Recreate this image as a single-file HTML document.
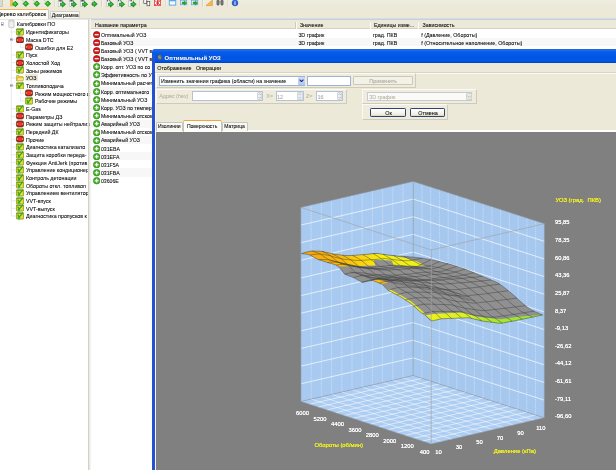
<!DOCTYPE html><html><head><meta charset="utf-8"><title>Оптимальный УОЗ</title><style>
html,body{margin:0;padding:0}
body{width:616px;height:470px;overflow:hidden;background:#ece9d8;position:relative;font-family:"Liberation Sans",sans-serif;font-size:5.3px;color:#000;line-height:1}
.a{position:absolute}
.t{position:absolute;white-space:nowrap;line-height:1;transform:translateY(-50%);-webkit-text-stroke:0.06px currentColor}
.b{font-weight:bold}
</style></head><body><div class="a" style="left:0;top:0;width:616px;height:470px;will-change:transform;overflow:hidden">
<div class="a" style="left:0.00px;top:0.00px;width:616.00px;height:8.00px;background:linear-gradient(#efeddf,#ebe8d8);"></div>
<div class="a" style="left:0.00px;top:7.40px;width:616.00px;height:11.00px;background:#ece9d8;"></div>
<div class="a" style="left:0.00px;top:18.30px;width:616.00px;height:1.20px;background:#d3dbe8;"></div>
<div class="a" style="left:-2.00px;top:8.50px;width:50.90px;height:10.40px;background:#fdfdfb;border:0.5px solid #c4c8c4;border-top:1.2px solid #f4b450;border-radius:1.5px 1.5px 0 0;box-sizing:border-box;border-bottom:none"></div>
<div class="t" style="left:-2.80px;top:14.90px;color:#000;font-size:5.40px;">Дерево калибровок</div>
<div class="a" style="left:49.60px;top:10.80px;width:30.00px;height:7.50px;background:#f8f7f2;border:0.5px solid #d0d0c8;border-radius:1.5px 1.5px 0 0;box-sizing:border-box;border-bottom:none"></div>
<div class="t" style="left:51.70px;top:15.70px;color:#000;font-size:5.20px;">Диаграмма</div>
<div class="a" style="left:0.00px;top:19.50px;width:88.30px;height:452.00px;background:#fff;"></div>
<div class="a" style="left:88.30px;top:18.80px;width:1.20px;height:452.00px;background:#d0d0cc;"></div>
<div class="a" style="left:89.50px;top:18.80px;width:1.50px;height:452.00px;background:#f4f3ee;"></div>
<div class="a" style="left:90.40px;top:19.30px;width:526.00px;height:451.00px;background:#fff;border-left:0.6px solid #c5cfdd;border-top:0.5px solid #c5cfdd;box-sizing:border-box"></div>
<div class="a" style="left:91.00px;top:19.80px;width:525.00px;height:9.60px;background:#ece9d8;border-bottom:0.7px solid #d6d2c2;box-sizing:border-box"></div>
<svg class="a" style="left:0;top:18.8px" width="89" height="452" viewBox="0 18.8 89 452">
<path d="M11.3 29 V215.85" stroke="#dcdcdc" stroke-width="0.6" fill="none"/>
<path d="M11.3 31.77 H16" stroke="#dcdcdc" stroke-width="0.6" fill="none"/>
<path d="M11.3 39.44 H16" stroke="#dcdcdc" stroke-width="0.6" fill="none"/>
<path d="M20.5 43.11 V47.11 H25.5" stroke="#dcdcdc" stroke-width="0.6" fill="none"/>
<path d="M11.3 54.78 H16" stroke="#dcdcdc" stroke-width="0.6" fill="none"/>
<path d="M11.3 62.45 H16" stroke="#dcdcdc" stroke-width="0.6" fill="none"/>
<path d="M11.3 70.12 H16" stroke="#dcdcdc" stroke-width="0.6" fill="none"/>
<path d="M11.3 77.79 H16" stroke="#dcdcdc" stroke-width="0.6" fill="none"/>
<path d="M11.3 85.46 H16" stroke="#dcdcdc" stroke-width="0.6" fill="none"/>
<path d="M20.5 89.13 V93.13 H25.5" stroke="#dcdcdc" stroke-width="0.6" fill="none"/>
<path d="M20.5 96.80 V100.80 H25.5" stroke="#dcdcdc" stroke-width="0.6" fill="none"/>
<path d="M11.3 108.47 H16" stroke="#dcdcdc" stroke-width="0.6" fill="none"/>
<path d="M11.3 116.14 H16" stroke="#dcdcdc" stroke-width="0.6" fill="none"/>
<path d="M11.3 123.81 H16" stroke="#dcdcdc" stroke-width="0.6" fill="none"/>
<path d="M11.3 131.48 H16" stroke="#dcdcdc" stroke-width="0.6" fill="none"/>
<path d="M11.3 139.15 H16" stroke="#dcdcdc" stroke-width="0.6" fill="none"/>
<path d="M11.3 146.82 H16" stroke="#dcdcdc" stroke-width="0.6" fill="none"/>
<path d="M11.3 154.49 H16" stroke="#dcdcdc" stroke-width="0.6" fill="none"/>
<path d="M11.3 162.16 H16" stroke="#dcdcdc" stroke-width="0.6" fill="none"/>
<path d="M11.3 169.83 H16" stroke="#dcdcdc" stroke-width="0.6" fill="none"/>
<path d="M11.3 177.50 H16" stroke="#dcdcdc" stroke-width="0.6" fill="none"/>
<path d="M11.3 185.17 H16" stroke="#dcdcdc" stroke-width="0.6" fill="none"/>
<path d="M11.3 192.84 H16" stroke="#dcdcdc" stroke-width="0.6" fill="none"/>
<path d="M11.3 200.51 H16" stroke="#dcdcdc" stroke-width="0.6" fill="none"/>
<path d="M11.3 208.18 H16" stroke="#dcdcdc" stroke-width="0.6" fill="none"/>
<path d="M11.3 215.85 H16" stroke="#dcdcdc" stroke-width="0.6" fill="none"/>
</svg>
<svg class="a" style="left:7.60px;top:19.10px" width="7" height="10" viewBox="0 0 7 10"><path d="M0.8 1.6 Q3.4 -0.2 6 1.6 L6 8.2 Q3.4 9.8 0.8 8.2Z" fill="#f1f1f1" stroke="#a9a9a9" stroke-width="0.6"/><path d="M0.8 1.8 Q3.4 3.2 6 1.8" fill="none" stroke="#b9b9b9" stroke-width="0.5"/></svg>
<div class="a" style="left:0.50px;top:22.40px;width:3.40px;height:3.40px;background:#fff;border:0.5px solid #c2cad6;box-sizing:border-box"></div>
<div class="a" style="left:1.30px;top:23.80px;width:1.80px;height:0.60px;background:#8890a0;"></div>
<div class="t" style="left:16.80px;top:25.00px;color:#000;">Калибровки ПО</div>
<svg class="a" style="left:16.00px;top:28.07px" width="8" height="7.6" viewBox="0 0 8 7.6"><rect x="0.3" y="0.9" width="7.4" height="6.2" rx="0.9" fill="#e6dc28" stroke="#6f9424" stroke-width="0.8"/><path d="M0.3 1.2 H7" stroke="#4c7a1c" stroke-width="0.7"/><circle cx="2.9" cy="5.6" r="1.3" fill="#48b030"/><path d="M2.9 7 V7.6" stroke="#5cb848" stroke-width="1"/><path d="M1.6 2.6 L3.2 5 L7.3 0.5" fill="none" stroke="#3aa428" stroke-width="1.2"/></svg>
<div class="t" style="left:25.90px;top:33.27px;color:#000;">Идентификаторы</div>
<svg class="a" style="left:16.00px;top:35.74px" width="8" height="7.6" viewBox="0 0 8 7.6"><rect x="0.4" y="0.9" width="7.2" height="6.1" rx="1.8" fill="#96281a" stroke="#6b2416" stroke-width="0.7"/><circle cx="4" cy="4" r="2.25" fill="#f23030"/><circle cx="1.5" cy="4" r="0.7" fill="#f0c83a"/><circle cx="6.5" cy="4" r="0.7" fill="#f0c83a"/></svg>
<div class="t" style="left:25.90px;top:40.94px;color:#000;">Маска DTC</div>
<svg class="a" style="left:25.40px;top:43.41px" width="8" height="7.6" viewBox="0 0 8 7.6"><rect x="0.4" y="0.9" width="7.2" height="6.1" rx="1.8" fill="#96281a" stroke="#6b2416" stroke-width="0.7"/><circle cx="4" cy="4" r="2.25" fill="#f23030"/><circle cx="1.5" cy="4" r="0.7" fill="#f0c83a"/><circle cx="6.5" cy="4" r="0.7" fill="#f0c83a"/></svg>
<div class="t" style="left:35.00px;top:48.61px;color:#000;">Ошибки для E2</div>
<svg class="a" style="left:16.00px;top:51.08px" width="8" height="7.6" viewBox="0 0 8 7.6"><rect x="0.3" y="0.9" width="7.4" height="6.2" rx="0.9" fill="#e6dc28" stroke="#6f9424" stroke-width="0.8"/><path d="M0.3 1.2 H7" stroke="#4c7a1c" stroke-width="0.7"/><circle cx="2.9" cy="5.6" r="1.3" fill="#48b030"/><path d="M2.9 7 V7.6" stroke="#5cb848" stroke-width="1"/><path d="M1.6 2.6 L3.2 5 L7.3 0.5" fill="none" stroke="#3aa428" stroke-width="1.2"/></svg>
<div class="t" style="left:25.90px;top:56.28px;color:#000;">Пуск</div>
<svg class="a" style="left:16.00px;top:58.75px" width="8" height="7.6" viewBox="0 0 8 7.6"><rect x="0.4" y="0.9" width="7.2" height="6.1" rx="1.8" fill="#96281a" stroke="#6b2416" stroke-width="0.7"/><circle cx="4" cy="4" r="2.25" fill="#f23030"/><circle cx="1.5" cy="4" r="0.7" fill="#f0c83a"/><circle cx="6.5" cy="4" r="0.7" fill="#f0c83a"/></svg>
<div class="t" style="left:25.90px;top:63.95px;color:#000;">Холостой Ход</div>
<svg class="a" style="left:16.00px;top:66.42px" width="8" height="7.6" viewBox="0 0 8 7.6"><rect x="0.3" y="0.9" width="7.4" height="6.2" rx="0.9" fill="#e6dc28" stroke="#6f9424" stroke-width="0.8"/><path d="M0.3 1.2 H7" stroke="#4c7a1c" stroke-width="0.7"/><circle cx="2.9" cy="5.6" r="1.3" fill="#48b030"/><path d="M2.9 7 V7.6" stroke="#5cb848" stroke-width="1"/><path d="M1.6 2.6 L3.2 5 L7.3 0.5" fill="none" stroke="#3aa428" stroke-width="1.2"/></svg>
<div class="t" style="left:25.90px;top:71.62px;color:#000;">Зоны режимов</div>
<svg class="a" style="left:16.00px;top:74.09px" width="8" height="7.6" viewBox="0 0 8 7.6"><path d="M0.5 1.6 L3 1.6 L3.6 2.4 L7 2.4 L7 6.8 L0.5 6.8Z" fill="#f4d23a" stroke="#a08a20" stroke-width="0.5"/><path d="M0.5 6.8 L1.8 3.6 L7.8 3.6 L7 6.8Z" fill="#fbe773" stroke="#a08a20" stroke-width="0.4"/></svg>
<div class="a" style="left:25.10px;top:74.19px;width:12.50px;height:7.20px;background:#ece9d8;"></div>
<div class="t" style="left:25.90px;top:79.29px;color:#000;">УОЗ</div>
<svg class="a" style="left:16.00px;top:81.76px" width="8" height="7.6" viewBox="0 0 8 7.6"><rect x="0.3" y="0.9" width="7.4" height="6.2" rx="0.9" fill="#e6dc28" stroke="#6f9424" stroke-width="0.8"/><path d="M0.3 1.2 H7" stroke="#4c7a1c" stroke-width="0.7"/><circle cx="2.9" cy="5.6" r="1.3" fill="#48b030"/><path d="M2.9 7 V7.6" stroke="#5cb848" stroke-width="1"/><path d="M1.6 2.6 L3.2 5 L7.3 0.5" fill="none" stroke="#3aa428" stroke-width="1.2"/></svg>
<div class="t" style="left:25.90px;top:86.96px;color:#000;">Топливоподача</div>
<svg class="a" style="left:25.40px;top:89.43px" width="8" height="7.6" viewBox="0 0 8 7.6"><rect x="0.4" y="0.9" width="7.2" height="6.1" rx="1.8" fill="#96281a" stroke="#6b2416" stroke-width="0.7"/><circle cx="4" cy="4" r="2.25" fill="#f23030"/><circle cx="1.5" cy="4" r="0.7" fill="#f0c83a"/><circle cx="6.5" cy="4" r="0.7" fill="#f0c83a"/></svg>
<div class="t" style="left:35.00px;top:94.63px;color:#000;">Режим мощностного с</div>
<svg class="a" style="left:25.40px;top:97.10px" width="8" height="7.6" viewBox="0 0 8 7.6"><rect x="0.3" y="0.9" width="7.4" height="6.2" rx="0.9" fill="#e6dc28" stroke="#6f9424" stroke-width="0.8"/><path d="M0.3 1.2 H7" stroke="#4c7a1c" stroke-width="0.7"/><circle cx="2.9" cy="5.6" r="1.3" fill="#48b030"/><path d="M2.9 7 V7.6" stroke="#5cb848" stroke-width="1"/><path d="M1.6 2.6 L3.2 5 L7.3 0.5" fill="none" stroke="#3aa428" stroke-width="1.2"/></svg>
<div class="t" style="left:35.00px;top:102.30px;color:#000;">Рабочие режимы</div>
<svg class="a" style="left:16.00px;top:104.77px" width="8" height="7.6" viewBox="0 0 8 7.6"><rect x="0.3" y="0.9" width="7.4" height="6.2" rx="0.9" fill="#e6dc28" stroke="#6f9424" stroke-width="0.8"/><path d="M0.3 1.2 H7" stroke="#4c7a1c" stroke-width="0.7"/><circle cx="2.9" cy="5.6" r="1.3" fill="#48b030"/><path d="M2.9 7 V7.6" stroke="#5cb848" stroke-width="1"/><path d="M1.6 2.6 L3.2 5 L7.3 0.5" fill="none" stroke="#3aa428" stroke-width="1.2"/></svg>
<div class="t" style="left:25.90px;top:109.97px;color:#000;">E-Gas</div>
<svg class="a" style="left:16.00px;top:112.44px" width="8" height="7.6" viewBox="0 0 8 7.6"><rect x="0.4" y="0.9" width="7.2" height="6.1" rx="1.8" fill="#96281a" stroke="#6b2416" stroke-width="0.7"/><circle cx="4" cy="4" r="2.25" fill="#f23030"/><circle cx="1.5" cy="4" r="0.7" fill="#f0c83a"/><circle cx="6.5" cy="4" r="0.7" fill="#f0c83a"/></svg>
<div class="t" style="left:25.90px;top:117.64px;color:#000;">Параметры ДЗ</div>
<svg class="a" style="left:16.00px;top:120.11px" width="8" height="7.6" viewBox="0 0 8 7.6"><rect x="0.4" y="0.9" width="7.2" height="6.1" rx="1.8" fill="#96281a" stroke="#6b2416" stroke-width="0.7"/><circle cx="4" cy="4" r="2.25" fill="#f23030"/><circle cx="1.5" cy="4" r="0.7" fill="#f0c83a"/><circle cx="6.5" cy="4" r="0.7" fill="#f0c83a"/></svg>
<div class="t" style="left:25.90px;top:125.31px;color:#000;">Режим защиты нейтрализ</div>
<svg class="a" style="left:16.00px;top:127.78px" width="8" height="7.6" viewBox="0 0 8 7.6"><rect x="0.3" y="0.9" width="7.4" height="6.2" rx="0.9" fill="#e6dc28" stroke="#6f9424" stroke-width="0.8"/><path d="M0.3 1.2 H7" stroke="#4c7a1c" stroke-width="0.7"/><circle cx="2.9" cy="5.6" r="1.3" fill="#48b030"/><path d="M2.9 7 V7.6" stroke="#5cb848" stroke-width="1"/><path d="M1.6 2.6 L3.2 5 L7.3 0.5" fill="none" stroke="#3aa428" stroke-width="1.2"/></svg>
<div class="t" style="left:25.90px;top:132.98px;color:#000;">Передний ДК</div>
<svg class="a" style="left:16.00px;top:135.45px" width="8" height="7.6" viewBox="0 0 8 7.6"><rect x="0.4" y="0.9" width="7.2" height="6.1" rx="1.8" fill="#96281a" stroke="#6b2416" stroke-width="0.7"/><circle cx="4" cy="4" r="2.25" fill="#f23030"/><circle cx="1.5" cy="4" r="0.7" fill="#f0c83a"/><circle cx="6.5" cy="4" r="0.7" fill="#f0c83a"/></svg>
<div class="t" style="left:25.90px;top:140.65px;color:#000;">Прочие</div>
<svg class="a" style="left:16.00px;top:143.12px" width="8" height="7.6" viewBox="0 0 8 7.6"><rect x="0.3" y="0.9" width="7.4" height="6.2" rx="0.9" fill="#e6dc28" stroke="#6f9424" stroke-width="0.8"/><path d="M0.3 1.2 H7" stroke="#4c7a1c" stroke-width="0.7"/><circle cx="2.9" cy="5.6" r="1.3" fill="#48b030"/><path d="M2.9 7 V7.6" stroke="#5cb848" stroke-width="1"/><path d="M1.6 2.6 L3.2 5 L7.3 0.5" fill="none" stroke="#3aa428" stroke-width="1.2"/></svg>
<div class="t" style="left:25.90px;top:148.32px;color:#000;">Диагностика катализато</div>
<svg class="a" style="left:16.00px;top:150.79px" width="8" height="7.6" viewBox="0 0 8 7.6"><rect x="0.3" y="0.9" width="7.4" height="6.2" rx="0.9" fill="#e6dc28" stroke="#6f9424" stroke-width="0.8"/><path d="M0.3 1.2 H7" stroke="#4c7a1c" stroke-width="0.7"/><circle cx="2.9" cy="5.6" r="1.3" fill="#48b030"/><path d="M2.9 7 V7.6" stroke="#5cb848" stroke-width="1"/><path d="M1.6 2.6 L3.2 5 L7.3 0.5" fill="none" stroke="#3aa428" stroke-width="1.2"/></svg>
<div class="t" style="left:25.90px;top:155.99px;color:#000;">Защита коробки переда-</div>
<svg class="a" style="left:16.00px;top:158.46px" width="8" height="7.6" viewBox="0 0 8 7.6"><rect x="0.3" y="0.9" width="7.4" height="6.2" rx="0.9" fill="#e6dc28" stroke="#6f9424" stroke-width="0.8"/><path d="M0.3 1.2 H7" stroke="#4c7a1c" stroke-width="0.7"/><circle cx="2.9" cy="5.6" r="1.3" fill="#48b030"/><path d="M2.9 7 V7.6" stroke="#5cb848" stroke-width="1"/><path d="M1.6 2.6 L3.2 5 L7.3 0.5" fill="none" stroke="#3aa428" stroke-width="1.2"/></svg>
<div class="t" style="left:25.90px;top:163.66px;color:#000;">Функция AntiJerk (против</div>
<svg class="a" style="left:16.00px;top:166.13px" width="8" height="7.6" viewBox="0 0 8 7.6"><rect x="0.3" y="0.9" width="7.4" height="6.2" rx="0.9" fill="#e6dc28" stroke="#6f9424" stroke-width="0.8"/><path d="M0.3 1.2 H7" stroke="#4c7a1c" stroke-width="0.7"/><circle cx="2.9" cy="5.6" r="1.3" fill="#48b030"/><path d="M2.9 7 V7.6" stroke="#5cb848" stroke-width="1"/><path d="M1.6 2.6 L3.2 5 L7.3 0.5" fill="none" stroke="#3aa428" stroke-width="1.2"/></svg>
<div class="t" style="left:25.90px;top:171.33px;color:#000;">Управление кондиционер</div>
<svg class="a" style="left:16.00px;top:173.80px" width="8" height="7.6" viewBox="0 0 8 7.6"><rect x="0.3" y="0.9" width="7.4" height="6.2" rx="0.9" fill="#e6dc28" stroke="#6f9424" stroke-width="0.8"/><path d="M0.3 1.2 H7" stroke="#4c7a1c" stroke-width="0.7"/><circle cx="2.9" cy="5.6" r="1.3" fill="#48b030"/><path d="M2.9 7 V7.6" stroke="#5cb848" stroke-width="1"/><path d="M1.6 2.6 L3.2 5 L7.3 0.5" fill="none" stroke="#3aa428" stroke-width="1.2"/></svg>
<div class="t" style="left:25.90px;top:179.00px;color:#000;">Контроль детонации</div>
<svg class="a" style="left:16.00px;top:181.47px" width="8" height="7.6" viewBox="0 0 8 7.6"><rect x="0.3" y="0.9" width="7.4" height="6.2" rx="0.9" fill="#e6dc28" stroke="#6f9424" stroke-width="0.8"/><path d="M0.3 1.2 H7" stroke="#4c7a1c" stroke-width="0.7"/><circle cx="2.9" cy="5.6" r="1.3" fill="#48b030"/><path d="M2.9 7 V7.6" stroke="#5cb848" stroke-width="1"/><path d="M1.6 2.6 L3.2 5 L7.3 0.5" fill="none" stroke="#3aa428" stroke-width="1.2"/></svg>
<div class="t" style="left:25.90px;top:186.67px;color:#000;">Обороты откл. топливоп</div>
<svg class="a" style="left:16.00px;top:189.14px" width="8" height="7.6" viewBox="0 0 8 7.6"><rect x="0.3" y="0.9" width="7.4" height="6.2" rx="0.9" fill="#e6dc28" stroke="#6f9424" stroke-width="0.8"/><path d="M0.3 1.2 H7" stroke="#4c7a1c" stroke-width="0.7"/><circle cx="2.9" cy="5.6" r="1.3" fill="#48b030"/><path d="M2.9 7 V7.6" stroke="#5cb848" stroke-width="1"/><path d="M1.6 2.6 L3.2 5 L7.3 0.5" fill="none" stroke="#3aa428" stroke-width="1.2"/></svg>
<div class="t" style="left:25.90px;top:194.34px;color:#000;">Управлением вентилятор</div>
<svg class="a" style="left:16.00px;top:196.81px" width="8" height="7.6" viewBox="0 0 8 7.6"><rect x="0.3" y="0.9" width="7.4" height="6.2" rx="0.9" fill="#e6dc28" stroke="#6f9424" stroke-width="0.8"/><path d="M0.3 1.2 H7" stroke="#4c7a1c" stroke-width="0.7"/><circle cx="2.9" cy="5.6" r="1.3" fill="#48b030"/><path d="M2.9 7 V7.6" stroke="#5cb848" stroke-width="1"/><path d="M1.6 2.6 L3.2 5 L7.3 0.5" fill="none" stroke="#3aa428" stroke-width="1.2"/></svg>
<div class="t" style="left:25.90px;top:202.01px;color:#000;">VVT-впуск</div>
<svg class="a" style="left:16.00px;top:204.48px" width="8" height="7.6" viewBox="0 0 8 7.6"><rect x="0.3" y="0.9" width="7.4" height="6.2" rx="0.9" fill="#e6dc28" stroke="#6f9424" stroke-width="0.8"/><path d="M0.3 1.2 H7" stroke="#4c7a1c" stroke-width="0.7"/><circle cx="2.9" cy="5.6" r="1.3" fill="#48b030"/><path d="M2.9 7 V7.6" stroke="#5cb848" stroke-width="1"/><path d="M1.6 2.6 L3.2 5 L7.3 0.5" fill="none" stroke="#3aa428" stroke-width="1.2"/></svg>
<div class="t" style="left:25.90px;top:209.68px;color:#000;">VVT-выпуск</div>
<svg class="a" style="left:16.00px;top:212.15px" width="8" height="7.6" viewBox="0 0 8 7.6"><rect x="0.3" y="0.9" width="7.4" height="6.2" rx="0.9" fill="#e6dc28" stroke="#6f9424" stroke-width="0.8"/><path d="M0.3 1.2 H7" stroke="#4c7a1c" stroke-width="0.7"/><circle cx="2.9" cy="5.6" r="1.3" fill="#48b030"/><path d="M2.9 7 V7.6" stroke="#5cb848" stroke-width="1"/><path d="M1.6 2.6 L3.2 5 L7.3 0.5" fill="none" stroke="#3aa428" stroke-width="1.2"/></svg>
<div class="t" style="left:25.90px;top:217.35px;color:#000;">Диагностика пропусков к</div>
<div class="a" style="left:9.60px;top:37.74px;width:3.40px;height:3.40px;background:#e4ebf5;border:0.5px solid #b8c6da;box-sizing:border-box"></div>
<div class="a" style="left:10.40px;top:39.14px;width:1.80px;height:0.60px;background:#8c96a8;"></div>
<div class="a" style="left:9.60px;top:83.76px;width:3.40px;height:3.40px;background:#e4ebf5;border:0.5px solid #b8c6da;box-sizing:border-box"></div>
<div class="a" style="left:10.40px;top:85.16px;width:1.80px;height:0.60px;background:#8c96a8;"></div>
<div class="a" style="left:88.30px;top:18.80px;width:1.20px;height:452.00px;background:#d0d0cc;"></div>
<div class="a" style="left:89.50px;top:18.80px;width:1.50px;height:452.00px;background:#f4f3ee;"></div>
<div class="t" style="left:95.00px;top:25.50px;color:#000;">Название параметра</div>
<div class="t" style="left:299.90px;top:25.50px;color:#000;">Значение</div>
<div class="t" style="left:374.00px;top:25.50px;color:#000;">Единицы изме...</div>
<div class="t" style="left:422.50px;top:25.50px;color:#000;">Зависимость</div>
<div class="a" style="left:295.00px;top:21.50px;width:0.60px;height:7.00px;background:#cfccbc;"></div>
<div class="a" style="left:295.60px;top:21.50px;width:0.60px;height:7.00px;background:#fbfaf6;"></div>
<div class="a" style="left:369.70px;top:21.50px;width:0.60px;height:7.00px;background:#cfccbc;"></div>
<div class="a" style="left:370.30px;top:21.50px;width:0.60px;height:7.00px;background:#fbfaf6;"></div>
<div class="a" style="left:417.70px;top:21.50px;width:0.60px;height:7.00px;background:#cfccbc;"></div>
<div class="a" style="left:418.30px;top:21.50px;width:0.60px;height:7.00px;background:#fbfaf6;"></div>
<svg class="a" style="left:93.1px;top:30.70px" width="7.4" height="7.4" viewBox="-0.2 -0.2 7.4 7.4"><circle cx="3.5" cy="3.5" r="3.25" fill="#d81c1c" stroke="#8a1010" stroke-width="0.7"/>
<rect x="1.5" y="2.9" width="4" height="1.2" fill="#fff"/></svg>
<div class="t" style="left:100.90px;top:35.50px;color:#000;font-size:5.20px;">Оптимальный УОЗ</div>
<div class="t" style="left:298.40px;top:35.50px;color:#000;font-size:5.35px;">3D график</div>
<div class="t" style="left:372.80px;top:35.50px;color:#000;font-size:5.35px;">град. ПКВ</div>
<div class="t" style="left:421.20px;top:35.50px;color:#000;font-size:5.35px;">f (Давление, Обороты)</div>
<div class="a" style="left:91.00px;top:38.07px;width:525.00px;height:8.15px;background:#f7f7f7;"></div>
<svg class="a" style="left:93.1px;top:38.85px" width="7.4" height="7.4" viewBox="-0.2 -0.2 7.4 7.4"><circle cx="3.5" cy="3.5" r="3.25" fill="#d81c1c" stroke="#8a1010" stroke-width="0.7"/>
<rect x="1.5" y="2.9" width="4" height="1.2" fill="#fff"/></svg>
<div class="t" style="left:100.90px;top:43.65px;color:#000;font-size:5.20px;">Базовый УОЗ</div>
<div class="t" style="left:298.40px;top:43.65px;color:#000;font-size:5.35px;">3D график</div>
<div class="t" style="left:372.80px;top:43.65px;color:#000;font-size:5.35px;">град. ПКВ</div>
<div class="t" style="left:421.20px;top:43.65px;color:#000;font-size:5.35px;">f (Относительное наполнение, Обороты)</div>
<svg class="a" style="left:93.1px;top:47.00px" width="7.4" height="7.4" viewBox="-0.2 -0.2 7.4 7.4"><circle cx="3.5" cy="3.5" r="3.25" fill="#d81c1c" stroke="#8a1010" stroke-width="0.7"/>
<rect x="1.5" y="2.9" width="4" height="1.2" fill="#fff"/></svg>
<div class="t" style="left:100.90px;top:51.80px;color:#000;font-size:5.20px;">Базовый УОЗ ( VVT в</div>
<div class="a" style="left:91.00px;top:54.38px;width:525.00px;height:8.15px;background:#f7f7f7;"></div>
<svg class="a" style="left:93.1px;top:55.15px" width="7.4" height="7.4" viewBox="-0.2 -0.2 7.4 7.4"><circle cx="3.5" cy="3.5" r="3.25" fill="#d81c1c" stroke="#8a1010" stroke-width="0.7"/>
<rect x="1.5" y="2.9" width="4" height="1.2" fill="#fff"/></svg>
<div class="t" style="left:100.90px;top:59.95px;color:#000;font-size:5.20px;">Базовый УОЗ ( VVT в</div>
<svg class="a" style="left:93.1px;top:63.30px" width="7.4" height="7.4" viewBox="-0.2 -0.2 7.4 7.4"><circle cx="3.5" cy="3.5" r="3.25" fill="#4cb82c" stroke="#2c7c18" stroke-width="0.7"/>
<path d="M3.5 1.6 V5.4 M1.6 3.5 H5.4" stroke="#fff" stroke-width="1.1"/></svg>
<div class="t" style="left:100.90px;top:68.10px;color:#000;font-size:5.20px;">Корр. опт. УОЗ по со</div>
<div class="a" style="left:91.00px;top:70.67px;width:525.00px;height:8.15px;background:#f7f7f7;"></div>
<svg class="a" style="left:93.1px;top:71.45px" width="7.4" height="7.4" viewBox="-0.2 -0.2 7.4 7.4"><circle cx="3.5" cy="3.5" r="3.25" fill="#4cb82c" stroke="#2c7c18" stroke-width="0.7"/>
<path d="M3.5 1.6 V5.4 M1.6 3.5 H5.4" stroke="#fff" stroke-width="1.1"/></svg>
<div class="t" style="left:100.90px;top:76.25px;color:#000;font-size:5.20px;">Эффективность по У</div>
<svg class="a" style="left:93.1px;top:79.60px" width="7.4" height="7.4" viewBox="-0.2 -0.2 7.4 7.4"><circle cx="3.5" cy="3.5" r="3.25" fill="#4cb82c" stroke="#2c7c18" stroke-width="0.7"/>
<path d="M3.5 1.6 V5.4 M1.6 3.5 H5.4" stroke="#fff" stroke-width="1.1"/></svg>
<div class="t" style="left:100.90px;top:84.40px;color:#000;font-size:5.20px;">Минимальный расчет</div>
<div class="a" style="left:91.00px;top:86.98px;width:525.00px;height:8.15px;background:#f7f7f7;"></div>
<svg class="a" style="left:93.1px;top:87.75px" width="7.4" height="7.4" viewBox="-0.2 -0.2 7.4 7.4"><circle cx="3.5" cy="3.5" r="3.25" fill="#4cb82c" stroke="#2c7c18" stroke-width="0.7"/>
<path d="M3.5 1.6 V5.4 M1.6 3.5 H5.4" stroke="#fff" stroke-width="1.1"/></svg>
<div class="t" style="left:100.90px;top:92.55px;color:#000;font-size:5.20px;">Корр. оптимального</div>
<svg class="a" style="left:93.1px;top:95.90px" width="7.4" height="7.4" viewBox="-0.2 -0.2 7.4 7.4"><circle cx="3.5" cy="3.5" r="3.25" fill="#4cb82c" stroke="#2c7c18" stroke-width="0.7"/>
<path d="M3.5 1.6 V5.4 M1.6 3.5 H5.4" stroke="#fff" stroke-width="1.1"/></svg>
<div class="t" style="left:100.90px;top:100.70px;color:#000;font-size:5.20px;">Минимальный УОЗ</div>
<div class="a" style="left:91.00px;top:103.28px;width:525.00px;height:8.15px;background:#f7f7f7;"></div>
<svg class="a" style="left:93.1px;top:104.05px" width="7.4" height="7.4" viewBox="-0.2 -0.2 7.4 7.4"><circle cx="3.5" cy="3.5" r="3.25" fill="#4cb82c" stroke="#2c7c18" stroke-width="0.7"/>
<path d="M3.5 1.6 V5.4 M1.6 3.5 H5.4" stroke="#fff" stroke-width="1.1"/></svg>
<div class="t" style="left:100.90px;top:108.85px;color:#000;font-size:5.20px;">Корр. УОЗ по темпер</div>
<svg class="a" style="left:93.1px;top:112.20px" width="7.4" height="7.4" viewBox="-0.2 -0.2 7.4 7.4"><circle cx="3.5" cy="3.5" r="3.25" fill="#4cb82c" stroke="#2c7c18" stroke-width="0.7"/>
<path d="M3.5 1.6 V5.4 M1.6 3.5 H5.4" stroke="#fff" stroke-width="1.1"/></svg>
<div class="t" style="left:100.90px;top:117.00px;color:#000;font-size:5.20px;">Минимальный отскок</div>
<div class="a" style="left:91.00px;top:119.58px;width:525.00px;height:8.15px;background:#f7f7f7;"></div>
<svg class="a" style="left:93.1px;top:120.35px" width="7.4" height="7.4" viewBox="-0.2 -0.2 7.4 7.4"><circle cx="3.5" cy="3.5" r="3.25" fill="#4cb82c" stroke="#2c7c18" stroke-width="0.7"/>
<path d="M3.5 1.6 V5.4 M1.6 3.5 H5.4" stroke="#fff" stroke-width="1.1"/></svg>
<div class="t" style="left:100.90px;top:125.15px;color:#000;font-size:5.20px;">Аварийный УОЗ</div>
<svg class="a" style="left:93.1px;top:128.50px" width="7.4" height="7.4" viewBox="-0.2 -0.2 7.4 7.4"><circle cx="3.5" cy="3.5" r="3.25" fill="#4cb82c" stroke="#2c7c18" stroke-width="0.7"/>
<path d="M3.5 1.6 V5.4 M1.6 3.5 H5.4" stroke="#fff" stroke-width="1.1"/></svg>
<div class="t" style="left:100.90px;top:133.30px;color:#000;font-size:5.20px;">Минимальный отскок</div>
<div class="a" style="left:91.00px;top:135.88px;width:525.00px;height:8.15px;background:#f7f7f7;"></div>
<svg class="a" style="left:93.1px;top:136.65px" width="7.4" height="7.4" viewBox="-0.2 -0.2 7.4 7.4"><circle cx="3.5" cy="3.5" r="3.25" fill="#4cb82c" stroke="#2c7c18" stroke-width="0.7"/>
<path d="M3.5 1.6 V5.4 M1.6 3.5 H5.4" stroke="#fff" stroke-width="1.1"/></svg>
<div class="t" style="left:100.90px;top:141.45px;color:#000;font-size:5.20px;">Аварийный УОЗ</div>
<svg class="a" style="left:93.1px;top:144.80px" width="7.4" height="7.4" viewBox="-0.2 -0.2 7.4 7.4"><circle cx="3.5" cy="3.5" r="3.25" fill="#4cb82c" stroke="#2c7c18" stroke-width="0.7"/>
<path d="M3.5 1.6 V5.4 M1.6 3.5 H5.4" stroke="#fff" stroke-width="1.1"/></svg>
<div class="t" style="left:100.90px;top:149.60px;color:#000;font-size:5.20px;">031EBA</div>
<div class="a" style="left:91.00px;top:152.18px;width:525.00px;height:8.15px;background:#f7f7f7;"></div>
<svg class="a" style="left:93.1px;top:152.95px" width="7.4" height="7.4" viewBox="-0.2 -0.2 7.4 7.4"><circle cx="3.5" cy="3.5" r="3.25" fill="#4cb82c" stroke="#2c7c18" stroke-width="0.7"/>
<path d="M3.5 1.6 V5.4 M1.6 3.5 H5.4" stroke="#fff" stroke-width="1.1"/></svg>
<div class="t" style="left:100.90px;top:157.75px;color:#000;font-size:5.20px;">031EFA</div>
<svg class="a" style="left:93.1px;top:161.10px" width="7.4" height="7.4" viewBox="-0.2 -0.2 7.4 7.4"><circle cx="3.5" cy="3.5" r="3.25" fill="#4cb82c" stroke="#2c7c18" stroke-width="0.7"/>
<path d="M3.5 1.6 V5.4 M1.6 3.5 H5.4" stroke="#fff" stroke-width="1.1"/></svg>
<div class="t" style="left:100.90px;top:165.90px;color:#000;font-size:5.20px;">031F5A</div>
<div class="a" style="left:91.00px;top:168.48px;width:525.00px;height:8.15px;background:#f7f7f7;"></div>
<svg class="a" style="left:93.1px;top:169.25px" width="7.4" height="7.4" viewBox="-0.2 -0.2 7.4 7.4"><circle cx="3.5" cy="3.5" r="3.25" fill="#4cb82c" stroke="#2c7c18" stroke-width="0.7"/>
<path d="M3.5 1.6 V5.4 M1.6 3.5 H5.4" stroke="#fff" stroke-width="1.1"/></svg>
<div class="t" style="left:100.90px;top:174.05px;color:#000;font-size:5.20px;">031FBA</div>
<svg class="a" style="left:93.1px;top:177.40px" width="7.4" height="7.4" viewBox="-0.2 -0.2 7.4 7.4"><circle cx="3.5" cy="3.5" r="3.25" fill="#4cb82c" stroke="#2c7c18" stroke-width="0.7"/>
<path d="M3.5 1.6 V5.4 M1.6 3.5 H5.4" stroke="#fff" stroke-width="1.1"/></svg>
<div class="t" style="left:100.90px;top:182.20px;color:#000;font-size:5.20px;">03606E</div>
<svg class="a" style="left:0;top:0" width="250" height="8" viewBox="0 0 250 8">
<rect x="-1" y="-1" width="3.4" height="7.4" fill="#dcdad0" stroke="#a8a69a" stroke-width="0.5"/>
<path d="M10.4 0 L12.6 0 L13.2 6 L10.6 6Z" fill="#f3c545" stroke="#c9952a" stroke-width="0.4"/>
<path d="M12.5 4.0 l2.8 -2.8 l2.8 2.8 l-2.8 2.8z" fill="#22b222" stroke="#168a16" stroke-width="0.8" stroke-linejoin="round"/><circle cx="15.0" cy="3.6" r="0.9" fill="#62dc62"/>
<path d="M21.8 0 l2.4 2" stroke="#b4b4b4" stroke-width="0.6"/>
<path d="M23.0 3.7 l2.8 -2.8 l2.8 2.8 l-2.8 2.8z" fill="#22b222" stroke="#168a16" stroke-width="0.8" stroke-linejoin="round"/><circle cx="25.5" cy="3.3" r="0.9" fill="#62dc62"/>
<path d="M32.8 0 l2.4 2" stroke="#b4b4b4" stroke-width="0.6"/>
<path d="M34.0 3.7 l2.8 -2.8 l2.8 2.8 l-2.8 2.8z" fill="#22b222" stroke="#168a16" stroke-width="0.8" stroke-linejoin="round"/><circle cx="36.5" cy="3.3" r="0.9" fill="#62dc62"/>
<path d="M43.8 0 l2.4 2" stroke="#b4b4b4" stroke-width="0.6"/>
<path d="M45.0 3.7 l2.8 -2.8 l2.8 2.8 l-2.8 2.8z" fill="#22b222" stroke="#168a16" stroke-width="0.8" stroke-linejoin="round"/><circle cx="47.5" cy="3.3" r="0.9" fill="#62dc62"/>
<rect x="54.2" y="0" width="0.6" height="6.6" fill="#c9c6b6"/><rect x="54.8" y="0" width="0.5" height="6.6" fill="#fbfaf5"/>
<rect x="58.2" y="-1" width="4.6" height="7.2" fill="#fbfcfd" stroke="#a9aeb8" stroke-width="0.5"/><rect x="58.8" y="0" width="0.8" height="1.6" fill="#222"/><rect x="60.1" y="0" width="0.8" height="1.6" fill="#222"/><rect x="61.4" y="0" width="0.8" height="1.6" fill="#222"/>
<path d="M60.4 3.1 h2.1 v-1.6 l3.2 2.8 l-3.2 2.8 v-1.6 h-2.1z" fill="#22b02c" stroke="#0b6f16" stroke-width="0.6" stroke-linejoin="round"/><path d="M61.2 4.0 h2.4" stroke="#7ee486" stroke-width="0.6"/>
<rect x="69.2" y="-1" width="4.6" height="7.2" fill="#fbfcfd" stroke="#a9aeb8" stroke-width="0.5"/><rect x="69.8" y="0" width="0.8" height="1.6" fill="#222"/><rect x="71.1" y="0" width="0.8" height="1.6" fill="#222"/><rect x="72.4" y="0" width="0.8" height="1.6" fill="#222"/>
<path d="M71.4 3.1 h2.1 v-1.6 l3.2 2.8 l-3.2 2.8 v-1.6 h-2.1z" fill="#22b02c" stroke="#0b6f16" stroke-width="0.6" stroke-linejoin="round"/><path d="M72.2 4.0 h2.4" stroke="#7ee486" stroke-width="0.6"/>
<rect x="80.2" y="-1" width="4.6" height="7.2" fill="#fbfcfd" stroke="#a9aeb8" stroke-width="0.5"/><rect x="80.8" y="0" width="0.8" height="1.6" fill="#222"/><rect x="82.1" y="0" width="0.8" height="1.6" fill="#222"/><rect x="83.4" y="0" width="0.8" height="1.6" fill="#222"/>
<path d="M82.4 3.1 h2.1 v-1.6 l3.2 2.8 l-3.2 2.8 v-1.6 h-2.1z" fill="#22b02c" stroke="#0b6f16" stroke-width="0.6" stroke-linejoin="round"/><path d="M83.2 4.0 h2.4" stroke="#7ee486" stroke-width="0.6"/>
<path d="M92.0 2.8 h2.1 v-1.6 l3.2 2.8 l-3.2 2.8 v-1.6 h-2.1z" fill="#22b02c" stroke="#0b6f16" stroke-width="0.6" stroke-linejoin="round"/><path d="M92.8 3.7 h2.4" stroke="#7ee486" stroke-width="0.6"/>
<path d="M93 0 v1.4" stroke="#999" stroke-width="0.6"/>
<rect x="101.4" y="0" width="0.6" height="6.6" fill="#c9c6b6"/><rect x="102.0" y="0" width="0.5" height="6.6" fill="#fbfaf5"/>
<rect x="106.2" y="-1" width="4.6" height="7.2" fill="#fbfcfd" stroke="#a9aeb8" stroke-width="0.5"/><rect x="107.2" y="0" width="0.8" height="1.4" fill="#333"/><rect x="108.8" y="0" width="0.8" height="1.4" fill="#333"/>
<path d="M108.4 3.1 h2.1 v-1.6 l3.2 2.8 l-3.2 2.8 v-1.6 h-2.1z" fill="#22b02c" stroke="#0b6f16" stroke-width="0.6" stroke-linejoin="round"/><path d="M109.2 4.0 h2.4" stroke="#7ee486" stroke-width="0.6"/>
<rect x="117.2" y="-1" width="4.6" height="7.2" fill="#fbfcfd" stroke="#a9aeb8" stroke-width="0.5"/><rect x="118.2" y="0" width="0.8" height="1.4" fill="#333"/><rect x="119.8" y="0" width="0.8" height="1.4" fill="#333"/>
<path d="M119.4 3.1 h2.1 v-1.6 l3.2 2.8 l-3.2 2.8 v-1.6 h-2.1z" fill="#22b02c" stroke="#0b6f16" stroke-width="0.6" stroke-linejoin="round"/><path d="M120.2 4.0 h2.4" stroke="#7ee486" stroke-width="0.6"/>
<rect x="128.7" y="-1" width="4.6" height="7.2" fill="#fbfcfd" stroke="#a9aeb8" stroke-width="0.5"/><rect x="129.7" y="0" width="0.8" height="1.4" fill="#333"/><rect x="131.3" y="0" width="0.8" height="1.4" fill="#333"/>
<path d="M130.9 3.1 h2.1 v-1.6 l3.2 2.8 l-3.2 2.8 v-1.6 h-2.1z" fill="#22b02c" stroke="#0b6f16" stroke-width="0.6" stroke-linejoin="round"/><path d="M131.7 4.0 h2.4" stroke="#7ee486" stroke-width="0.6"/>
<rect x="139.3" y="0" width="0.6" height="6.6" fill="#c9c6b6"/><rect x="139.9" y="0" width="0.5" height="6.6" fill="#fbfaf5"/>
<rect x="143.8" y="-1" width="3" height="4.4" fill="#fafafa" stroke="#333" stroke-width="0.6"/><rect x="147" y="1.4" width="2.8" height="4.4" fill="#fafafa" stroke="#333" stroke-width="0.6"/>
<rect x="154.6" y="-1" width="2.8" height="6.4" fill="#fff" stroke="#d22" stroke-width="0.7"/><rect x="158" y="0" width="2.6" height="5.6" fill="#fff" stroke="#d22" stroke-width="0.7"/><path d="M154.6 0.4 L160.6 5.4 M160.6 0.4 L154.6 5.4" stroke="#e01818" stroke-width="0.8"/>
<rect x="165.2" y="0" width="0.6" height="6.6" fill="#c9c6b6"/><rect x="165.8" y="0" width="0.5" height="6.6" fill="#fbfaf5"/>
<rect x="169.2" y="-0.5" width="6.6" height="5.6" fill="#f4f8ff" stroke="#3a8ae0" stroke-width="0.7"/><rect x="169.2" y="-0.5" width="6.6" height="1.8" fill="#58a6f0"/>
<rect x="180.6" y="0.2" width="6.2" height="4.6" fill="#dff0ff" stroke="#4a98e4" stroke-width="0.6"/>
<path d="M182.2 2 h2 v-1.2 l2.6 2.2 l-2.6 2.2 v-1.2 h-2z" fill="#27b027" stroke="#147414" stroke-width="0.35"/>
<rect x="191.6" y="0.2" width="6.2" height="4.6" fill="#dff0ff" stroke="#4a98e4" stroke-width="0.6"/>
<path d="M193.2 2 h2 v-1.2 l2.6 2.2 l-2.6 2.2 v-1.2 h-2z" fill="#27b027" stroke="#147414" stroke-width="0.35"/>
<rect x="202.4" y="0" width="0.6" height="6.6" fill="#c9c6b6"/><rect x="203.0" y="0" width="0.5" height="6.6" fill="#fbfaf5"/>
<path d="M206 5.6 L212.4 5.6 L212.4 0 Z" fill="#f6b84a" stroke="#d08a1c" stroke-width="0.5"/>
<rect x="216.8" y="0" width="2.4" height="5.2" rx="1" fill="#777" stroke="#444" stroke-width="0.4"/><rect x="220.8" y="0" width="2.4" height="5.2" rx="1" fill="#777" stroke="#444" stroke-width="0.4"/><rect x="219" y="1" width="2" height="1.6" fill="#999"/>
<rect x="227.6" y="0" width="0.6" height="6.6" fill="#c9c6b6"/><rect x="228.2" y="0" width="0.5" height="6.6" fill="#fbfaf5"/>
<circle cx="235" cy="2.9" r="3" fill="#2a62d8" stroke="#1840a0" stroke-width="0.4"/><rect x="234.5" y="2.2" width="1" height="2.6" fill="#fff"/><rect x="234.5" y="0.8" width="1" height="0.9" fill="#fff"/>
</svg><div class="a" style="left:152.40px;top:49.00px;width:464.00px;height:421.00px;background:#ece9d8;border-radius:3px 0 0 0"></div>
<div class="a" style="left:152.40px;top:49.00px;width:464.00px;height:14.10px;background:linear-gradient(#2a5fd4 0%,#1c6cf0 9%,#075ceb 22%,#0054e4 60%,#0158e8 84%,#0241c2 100%);border-radius:3px 0 0 0"></div>
<div class="a" style="left:152.40px;top:55.00px;width:2.20px;height:415.00px;background:#2352d2;"></div>
<div class="a" style="left:154.70px;top:62.60px;width:0.60px;height:408.00px;background:#f6f5ee;"></div>
<svg class="a" style="left:156.6px;top:53.6px" width="5.4" height="6.4" viewBox="0 0 5.4 6.4"><ellipse cx="2.7" cy="3.2" rx="2.3" ry="2.8" fill="#6f7684" stroke="#3a4152" stroke-width="0.5"/><path d="M1.4 2 L3.6 4.6" stroke="#b8bcc6" stroke-width="0.6"/></svg>
<div class="t" style="left:164.60px;top:57.90px;color:#fff;font-size:6.00px;font-weight:bold;text-shadow:0.4px 0.4px 0 #0a2a80;">Оптимальный УОЗ</div>
<div class="t" style="left:157.20px;top:69.20px;color:#000;font-size:5.40px;">Отображение</div>
<div class="t" style="left:195.90px;top:69.20px;color:#000;font-size:5.40px;">Операции</div>
<div class="a" style="left:155.30px;top:72.30px;width:461.00px;height:0.50px;background:#d8d4c4;"></div>
<div class="a" style="left:155.30px;top:72.80px;width:461.00px;height:0.50px;background:#fbfaf6;"></div>
<div class="a" style="left:155.50px;top:73.40px;width:260.00px;height:14.90px;background:#efecdd;border-right:0.7px solid #cfcbb8;border-bottom:0.7px solid #cfcbb8;border-left:0.6px solid #fbfaf4;border-top:0.6px solid #fbfaf4;box-sizing:border-box"></div>
<div class="a" style="left:158.80px;top:75.80px;width:146.60px;height:9.80px;background:#fff;border:0.7px solid #9db4d6;box-sizing:border-box"></div>
<div class="a" style="left:298.10px;top:76.50px;width:6.70px;height:8.40px;background:linear-gradient(#cfdcfb,#b2c6f3);border-radius:1px"></div>
<svg class="a" style="left:298.9px;top:78.9px" width="5" height="3.6" viewBox="0 0 5 3.6"><path d="M0.6 0.7 L2.5 2.7 L4.4 0.7" fill="none" stroke="#1c2c6a" stroke-width="1.1"/></svg>
<div class="t" style="left:160.90px;top:82.30px;color:#000;font-size:5.26px;">Изменить значения графика (области) на значение</div>
<div class="a" style="left:307.30px;top:75.80px;width:43.50px;height:9.80px;background:#fff;border:0.7px solid #9db4d6;box-sizing:border-box"></div>
<div class="a" style="left:353.20px;top:76.20px;width:59.50px;height:9.20px;background:#f3f2e9;border:0.6px solid #cbc8b8;border-radius:1px;box-sizing:border-box"></div>
<div class="t" style="left:369.30px;top:82.40px;color:#aaa89a;font-size:5.40px;">Применить</div>
<div class="a" style="left:155.50px;top:88.80px;width:191.50px;height:15.40px;background:#efecdd;border-right:0.7px solid #cfcbb8;border-bottom:0.7px solid #cfcbb8;border-left:0.6px solid #fbfaf4;border-top:0.6px solid #fbfaf4;box-sizing:border-box"></div>
<div class="t" style="left:159.20px;top:97.30px;color:#b4b1a2;font-size:5.40px;">Адрес (hex)</div>
<div class="a" style="left:191.50px;top:91.30px;width:71.50px;height:10.00px;background:#fff;border:0.7px solid #b3c2d8;box-sizing:border-box"></div>
<div class="a" style="left:256.60px;top:92.10px;width:5.60px;height:8.40px;background:#e9ecf0;border:0.5px solid #d3d8de;box-sizing:border-box;border-radius:1px"></div>
<svg class="a" style="left:257.70px;top:93.3px" width="3.4" height="6" viewBox="0 0 3.4 6"><path d="M0.4 2 L1.7 0.6 L3 2 M0.4 4 L1.7 5.4 L3 4" fill="none" stroke="#b4b6b4" stroke-width="0.7"/></svg>
<div class="t" style="left:266.20px;top:97.30px;color:#b4b1a2;font-size:5.40px;">X=</div>
<div class="a" style="left:275.50px;top:91.30px;width:28.00px;height:10.00px;background:#fff;border:0.7px solid #b3c2d8;box-sizing:border-box"></div>
<div class="a" style="left:297.10px;top:92.10px;width:5.60px;height:8.40px;background:#e9ecf0;border:0.5px solid #d3d8de;box-sizing:border-box;border-radius:1px"></div>
<svg class="a" style="left:298.20px;top:93.3px" width="3.4" height="6" viewBox="0 0 3.4 6"><path d="M0.4 2 L1.7 0.6 L3 2 M0.4 4 L1.7 5.4 L3 4" fill="none" stroke="#b4b6b4" stroke-width="0.7"/></svg>
<div class="t" style="left:276.90px;top:97.60px;color:#a8a8a0;font-size:5.60px;">12</div>
<div class="t" style="left:306.00px;top:97.30px;color:#b4b1a2;font-size:5.40px;">Z=</div>
<div class="a" style="left:316.00px;top:91.30px;width:27.20px;height:10.00px;background:#fff;border:0.7px solid #b3c2d8;box-sizing:border-box"></div>
<div class="a" style="left:336.80px;top:92.10px;width:5.60px;height:8.40px;background:#e9ecf0;border:0.5px solid #d3d8de;box-sizing:border-box;border-radius:1px"></div>
<svg class="a" style="left:337.90px;top:93.3px" width="3.4" height="6" viewBox="0 0 3.4 6"><path d="M0.4 2 L1.7 0.6 L3 2 M0.4 4 L1.7 5.4 L3 4" fill="none" stroke="#b4b6b4" stroke-width="0.7"/></svg>
<div class="t" style="left:317.40px;top:97.60px;color:#a8a8a0;font-size:5.60px;">16</div>
<div class="a" style="left:362.00px;top:88.90px;width:114.70px;height:15.30px;background:#efecdd;border-right:0.7px solid #cfcbb8;border-bottom:0.7px solid #cfcbb8;border-left:0.6px solid #fbfaf4;border-top:0.6px solid #fbfaf4;box-sizing:border-box"></div>
<div class="a" style="left:367.30px;top:92.30px;width:105.00px;height:8.80px;background:#fbfaf6;border:0.6px solid #c3cbd6;box-sizing:border-box"></div>
<div class="t" style="left:369.20px;top:98.10px;color:#b4b1a2;font-size:5.40px;">3D график</div>
<div class="a" style="left:465.60px;top:93.00px;width:6.00px;height:7.40px;background:#ecebe4;border:0.5px solid #d4d3ca;box-sizing:border-box;border-radius:1px"></div>
<svg class="a" style="left:466.5px;top:95.1px" width="4.4" height="3.4" viewBox="0 0 4.4 3.4"><path d="M0.5 0.6 L2.2 2.6 L3.9 0.6" fill="none" stroke="#b4b4ac" stroke-width="0.8"/></svg>
<div class="a" style="left:362.00px;top:104.30px;width:85.90px;height:16.20px;background:#efecdd;border-right:0.7px solid #cfcbb8;border-bottom:0.7px solid #cfcbb8;border-left:0.6px solid #fbfaf4;border-top:0.6px solid #fbfaf4;box-sizing:border-box"></div>
<div class="a" style="left:370.00px;top:108.20px;width:36.00px;height:8.60px;background:linear-gradient(#ffffff,#f2f0e6 70%,#dcd8c8);border:0.6px solid #2a456e;border-radius:1.2px;box-sizing:border-box"></div>
<div class="t" style="left:385.20px;top:114.30px;color:#000;font-size:5.40px;">Ок</div>
<div class="a" style="left:409.80px;top:108.20px;width:35.20px;height:8.60px;background:linear-gradient(#ffffff,#f2f0e6 70%,#dcd8c8);border:0.6px solid #2a456e;border-radius:1.2px;box-sizing:border-box"></div>
<div class="t" style="left:418.30px;top:114.30px;color:#000;font-size:5.40px;">Отмена</div>
<div class="a" style="left:155.30px;top:130.30px;width:461.00px;height:1.50px;background:#fdfdfb;"></div>
<div class="a" style="left:155.80px;top:121.60px;width:27.50px;height:9.40px;background:#f9f8f3;border:0.6px solid #c6c7ba;border-bottom:none;border-radius:1.5px 1.5px 0 0;box-sizing:border-box"></div>
<div class="t" style="left:157.90px;top:127.40px;color:#000;font-size:5.05px;">Изолинии</div>
<div class="a" style="left:222.30px;top:121.60px;width:25.40px;height:9.40px;background:#f9f8f3;border:0.6px solid #c6c7ba;border-bottom:none;border-radius:1.5px 1.5px 0 0;box-sizing:border-box"></div>
<div class="t" style="left:224.30px;top:127.40px;color:#000;font-size:5.05px;">Матрица</div>
<div class="a" style="left:183.30px;top:120.00px;width:39.20px;height:11.60px;background:#fdfdfb;border:0.6px solid #c6c7ba;border-top:1.2px solid #f2a838;border-bottom:none;border-radius:1.5px 1.5px 0 0;box-sizing:border-box"></div>
<div class="t" style="left:186.90px;top:126.70px;color:#000;font-size:5.08px;">Поверхность</div>
<svg class="a" style="left:156.3px;top:131.8px" width="459.7" height="338.2" viewBox="156.3 131.8 459.7 338.2">
<rect x="156.3" y="131.8" width="470" height="340" fill="#808080"/>
<polygon points="301.2,207.2 413.5,181.2 413.4,375.3 301.3,401.2" fill="#a9caf0"/>
<polygon points="413.5,181.2 544.7,223.5 544.6,417.6 413.4,375.3" fill="#a6c8ef"/>
<polygon points="301.3,401.2 413.4,375.3 544.6,417.6 431.5,443.7" fill="#adcdf2"/>
<line x1="301.21" y1="224.84" x2="413.49" y2="198.85" stroke="#fff" stroke-width="0.70" opacity="0.95"/>
<line x1="413.49" y1="198.85" x2="544.69" y2="241.15" stroke="#fff" stroke-width="0.70" opacity="0.95"/>
<line x1="301.22" y1="242.47" x2="413.48" y2="216.49" stroke="#fff" stroke-width="0.70" opacity="0.95"/>
<line x1="413.48" y1="216.49" x2="544.68" y2="258.79" stroke="#fff" stroke-width="0.70" opacity="0.95"/>
<line x1="301.23" y1="260.11" x2="413.47" y2="234.14" stroke="#fff" stroke-width="0.70" opacity="0.95"/>
<line x1="413.47" y1="234.14" x2="544.67" y2="276.44" stroke="#fff" stroke-width="0.70" opacity="0.95"/>
<line x1="301.24" y1="277.75" x2="413.46" y2="251.78" stroke="#fff" stroke-width="0.70" opacity="0.95"/>
<line x1="413.46" y1="251.78" x2="544.66" y2="294.08" stroke="#fff" stroke-width="0.70" opacity="0.95"/>
<line x1="301.25" y1="295.38" x2="413.45" y2="269.43" stroke="#fff" stroke-width="0.70" opacity="0.95"/>
<line x1="413.45" y1="269.43" x2="544.65" y2="311.73" stroke="#fff" stroke-width="0.70" opacity="0.95"/>
<line x1="301.25" y1="313.02" x2="413.45" y2="287.07" stroke="#fff" stroke-width="0.70" opacity="0.95"/>
<line x1="413.45" y1="287.07" x2="544.65" y2="329.37" stroke="#fff" stroke-width="0.70" opacity="0.95"/>
<line x1="301.26" y1="330.65" x2="413.44" y2="304.72" stroke="#fff" stroke-width="0.70" opacity="0.95"/>
<line x1="413.44" y1="304.72" x2="544.64" y2="347.02" stroke="#fff" stroke-width="0.70" opacity="0.95"/>
<line x1="301.27" y1="348.29" x2="413.43" y2="322.36" stroke="#fff" stroke-width="0.70" opacity="0.95"/>
<line x1="413.43" y1="322.36" x2="544.63" y2="364.66" stroke="#fff" stroke-width="0.70" opacity="0.95"/>
<line x1="301.28" y1="365.93" x2="413.42" y2="340.01" stroke="#fff" stroke-width="0.70" opacity="0.95"/>
<line x1="413.42" y1="340.01" x2="544.62" y2="382.31" stroke="#fff" stroke-width="0.70" opacity="0.95"/>
<line x1="301.29" y1="383.56" x2="413.41" y2="357.65" stroke="#fff" stroke-width="0.70" opacity="0.95"/>
<line x1="413.41" y1="357.65" x2="544.61" y2="399.95" stroke="#fff" stroke-width="0.70" opacity="0.95"/>
<line x1="311.41" y1="204.84" x2="311.49" y2="398.85" stroke="#fff" stroke-width="0.60" stroke-dasharray="1.2 0.8" opacity="0.60"/>
<line x1="311.49" y1="398.85" x2="441.78" y2="441.33" stroke="#fff" stroke-width="0.60" opacity="0.75"/>
<line x1="321.62" y1="202.47" x2="321.68" y2="396.49" stroke="#fff" stroke-width="0.60" stroke-dasharray="1.2 0.8" opacity="0.60"/>
<line x1="321.68" y1="396.49" x2="452.06" y2="438.95" stroke="#fff" stroke-width="0.60" opacity="0.75"/>
<line x1="331.83" y1="200.11" x2="331.87" y2="394.14" stroke="#fff" stroke-width="0.60" stroke-dasharray="1.2 0.8" opacity="0.60"/>
<line x1="331.87" y1="394.14" x2="462.35" y2="436.58" stroke="#fff" stroke-width="0.60" opacity="0.75"/>
<line x1="342.04" y1="197.75" x2="342.06" y2="391.78" stroke="#fff" stroke-width="0.60" stroke-dasharray="1.2 0.8" opacity="0.60"/>
<line x1="342.06" y1="391.78" x2="472.63" y2="434.21" stroke="#fff" stroke-width="0.60" opacity="0.75"/>
<line x1="352.25" y1="195.38" x2="352.25" y2="389.43" stroke="#fff" stroke-width="0.60" stroke-dasharray="1.2 0.8" opacity="0.60"/>
<line x1="352.25" y1="389.43" x2="482.91" y2="431.84" stroke="#fff" stroke-width="0.60" opacity="0.75"/>
<line x1="362.45" y1="193.02" x2="362.45" y2="387.07" stroke="#fff" stroke-width="0.60" stroke-dasharray="1.2 0.8" opacity="0.60"/>
<line x1="362.45" y1="387.07" x2="493.19" y2="429.46" stroke="#fff" stroke-width="0.60" opacity="0.75"/>
<line x1="372.66" y1="190.65" x2="372.64" y2="384.72" stroke="#fff" stroke-width="0.60" stroke-dasharray="1.2 0.8" opacity="0.60"/>
<line x1="372.64" y1="384.72" x2="503.47" y2="427.09" stroke="#fff" stroke-width="0.60" opacity="0.75"/>
<line x1="382.87" y1="188.29" x2="382.83" y2="382.36" stroke="#fff" stroke-width="0.60" stroke-dasharray="1.2 0.8" opacity="0.60"/>
<line x1="382.83" y1="382.36" x2="513.75" y2="424.72" stroke="#fff" stroke-width="0.60" opacity="0.75"/>
<line x1="393.08" y1="185.93" x2="393.02" y2="380.01" stroke="#fff" stroke-width="0.60" stroke-dasharray="1.2 0.8" opacity="0.60"/>
<line x1="393.02" y1="380.01" x2="524.04" y2="422.35" stroke="#fff" stroke-width="0.60" opacity="0.75"/>
<line x1="403.29" y1="183.56" x2="403.21" y2="377.65" stroke="#fff" stroke-width="0.60" stroke-dasharray="1.2 0.8" opacity="0.60"/>
<line x1="403.21" y1="377.65" x2="534.32" y2="419.97" stroke="#fff" stroke-width="0.60" opacity="0.75"/>
<line x1="422.25" y1="184.02" x2="422.15" y2="378.12" stroke="#fff" stroke-width="0.60" stroke-dasharray="1.2 0.8" opacity="0.60"/>
<line x1="422.15" y1="378.12" x2="309.98" y2="404.03" stroke="#fff" stroke-width="0.65" opacity="0.85"/>
<line x1="430.99" y1="186.84" x2="430.89" y2="380.94" stroke="#fff" stroke-width="0.60" stroke-dasharray="1.2 0.8" opacity="0.60"/>
<line x1="430.89" y1="380.94" x2="318.66" y2="406.87" stroke="#fff" stroke-width="0.65" opacity="0.85"/>
<line x1="439.74" y1="189.66" x2="439.64" y2="383.76" stroke="#fff" stroke-width="0.60" stroke-dasharray="1.2 0.8" opacity="0.60"/>
<line x1="439.64" y1="383.76" x2="327.34" y2="409.70" stroke="#fff" stroke-width="0.65" opacity="0.85"/>
<line x1="448.49" y1="192.48" x2="448.39" y2="386.58" stroke="#fff" stroke-width="0.60" stroke-dasharray="1.2 0.8" opacity="0.60"/>
<line x1="448.39" y1="386.58" x2="336.02" y2="412.53" stroke="#fff" stroke-width="0.65" opacity="0.85"/>
<line x1="457.23" y1="195.30" x2="457.13" y2="389.40" stroke="#fff" stroke-width="0.60" stroke-dasharray="1.2 0.8" opacity="0.60"/>
<line x1="457.13" y1="389.40" x2="344.70" y2="415.37" stroke="#fff" stroke-width="0.65" opacity="0.85"/>
<line x1="465.98" y1="198.12" x2="465.88" y2="392.22" stroke="#fff" stroke-width="0.60" stroke-dasharray="1.2 0.8" opacity="0.60"/>
<line x1="465.88" y1="392.22" x2="353.38" y2="418.20" stroke="#fff" stroke-width="0.65" opacity="0.85"/>
<line x1="474.73" y1="200.94" x2="474.63" y2="395.04" stroke="#fff" stroke-width="0.60" stroke-dasharray="1.2 0.8" opacity="0.60"/>
<line x1="474.63" y1="395.04" x2="362.06" y2="421.03" stroke="#fff" stroke-width="0.65" opacity="0.85"/>
<line x1="483.47" y1="203.76" x2="483.37" y2="397.86" stroke="#fff" stroke-width="0.60" stroke-dasharray="1.2 0.8" opacity="0.60"/>
<line x1="483.37" y1="397.86" x2="370.74" y2="423.87" stroke="#fff" stroke-width="0.65" opacity="0.85"/>
<line x1="492.22" y1="206.58" x2="492.12" y2="400.68" stroke="#fff" stroke-width="0.60" stroke-dasharray="1.2 0.8" opacity="0.60"/>
<line x1="492.12" y1="400.68" x2="379.42" y2="426.70" stroke="#fff" stroke-width="0.65" opacity="0.85"/>
<line x1="500.97" y1="209.40" x2="500.87" y2="403.50" stroke="#fff" stroke-width="0.60" stroke-dasharray="1.2 0.8" opacity="0.60"/>
<line x1="500.87" y1="403.50" x2="388.10" y2="429.53" stroke="#fff" stroke-width="0.65" opacity="0.85"/>
<line x1="509.71" y1="212.22" x2="509.61" y2="406.32" stroke="#fff" stroke-width="0.60" stroke-dasharray="1.2 0.8" opacity="0.60"/>
<line x1="509.61" y1="406.32" x2="396.78" y2="432.37" stroke="#fff" stroke-width="0.65" opacity="0.85"/>
<line x1="518.46" y1="215.04" x2="518.36" y2="409.14" stroke="#fff" stroke-width="0.60" stroke-dasharray="1.2 0.8" opacity="0.60"/>
<line x1="518.36" y1="409.14" x2="405.46" y2="435.20" stroke="#fff" stroke-width="0.65" opacity="0.85"/>
<line x1="527.21" y1="217.86" x2="527.11" y2="411.96" stroke="#fff" stroke-width="0.60" stroke-dasharray="1.2 0.8" opacity="0.60"/>
<line x1="527.11" y1="411.96" x2="414.14" y2="438.03" stroke="#fff" stroke-width="0.65" opacity="0.85"/>
<line x1="535.95" y1="220.68" x2="535.85" y2="414.78" stroke="#fff" stroke-width="0.60" stroke-dasharray="1.2 0.8" opacity="0.60"/>
<line x1="535.85" y1="414.78" x2="422.82" y2="440.87" stroke="#fff" stroke-width="0.65" opacity="0.85"/>
<line x1="301.20" y1="207.20" x2="413.50" y2="181.20" stroke="#939aa6" stroke-width="0.55" opacity="1.00"/>
<line x1="413.50" y1="181.20" x2="544.70" y2="223.50" stroke="#939aa6" stroke-width="0.55" opacity="1.00"/>
<line x1="301.20" y1="207.20" x2="301.30" y2="401.20" stroke="#939aa6" stroke-width="0.55" opacity="1.00"/>
<line x1="413.50" y1="181.20" x2="413.40" y2="375.30" stroke="#939aa6" stroke-width="0.55" opacity="1.00"/>
<line x1="544.70" y1="223.50" x2="544.60" y2="417.60" stroke="#939aa6" stroke-width="0.55" opacity="1.00"/>
<line x1="301.30" y1="401.20" x2="413.40" y2="375.30" stroke="#939aa6" stroke-width="0.55" opacity="1.00"/>
<line x1="413.40" y1="375.30" x2="544.60" y2="417.60" stroke="#939aa6" stroke-width="0.55" opacity="1.00"/>
<line x1="301.30" y1="401.20" x2="431.50" y2="443.70" stroke="#939aa6" stroke-width="0.55" opacity="1.00"/>
<line x1="431.50" y1="443.70" x2="544.60" y2="417.60" stroke="#939aa6" stroke-width="0.55" opacity="1.00"/>
<polygon points="301.8,253.4 306.0,252.0 312.2,250.8 322.0,251.1 336.0,254.3 348.0,255.5 356.0,255.0 368.7,254.0 375.5,253.0 389.8,255.0 408.0,256.5 414.0,257.0 422.7,258.0 434.1,260.0 445.5,262.9 450.0,263.9 466.2,269.2 482.5,276.1 498.7,282.9 506.8,289.0 514.9,295.8 523.0,303.3 531.2,309.5 543.0,314.8 519.0,319.8 500.9,323.2 482.7,320.9 469.0,317.5 441.8,318.6 431.5,320.9 425.9,315.2 421.2,312.3 411.4,303.4 400.0,296.1 388.7,290.4 382.2,283.9 372.5,280.0 362.7,282.3 354.4,277.6 345.4,274.3 338.9,266.5 336.0,264.6 327.2,262.1 317.4,258.9 309.6,254.4 301.8,253.4" fill="#909090"/>
<defs><linearGradient id="og" gradientUnits="userSpaceOnUse" x1="302" y1="0" x2="424" y2="0"><stop offset="0" stop-color="#f6a306"/><stop offset="0.3" stop-color="#f9b80a"/><stop offset="0.5" stop-color="#fbd40c"/><stop offset="0.65" stop-color="#f4ee12"/><stop offset="1" stop-color="#eef21a"/></linearGradient><linearGradient id="yg" gradientUnits="userSpaceOnUse" x1="426" y1="0" x2="543" y2="0"><stop offset="0" stop-color="#eaf21c"/><stop offset="0.36" stop-color="#d8f022"/><stop offset="0.5" stop-color="#aee82a"/><stop offset="1" stop-color="#8fe62e"/></linearGradient></defs>
<polygon points="301.8,253.4 306.0,252.0 312.2,250.8 322.0,251.1 336.0,254.3 348.0,255.5 356.0,255.0 366.0,254.4 379.0,253.6 393.3,255.9 405.0,257.6 418.0,261.5 425.1,265.4 408.9,266.3 393.9,264.8 392.0,260.2 373.8,259.6 375.7,265.4 366.0,265.6 356.0,266.0 338.9,266.3 336.0,264.6 327.2,262.1 317.4,258.9 309.6,254.4" fill="url(#og)"/>
<polygon points="372.5,280.0 376.0,278.4 388.7,282.3 382.2,283.9" fill="#f8bc10"/>
<polygon points="388.7,290.4 400.0,296.1 411.4,303.4 421.2,312.3 425.9,315.2 424.0,312.0 412.0,301.5 400.0,294.4 389.0,288.6" fill="#eaea20"/>
<polygon points="425.9,315.0 435.0,313.6 464.5,312.3 471.0,314.6 478.2,316.6 501.0,319.0 519.0,316.6 543.0,314.6 543.0,315.0 519.0,319.8 500.9,323.2 482.7,320.9 469.0,317.5 441.8,318.6 432.7,320.9" fill="url(#yg)"/>
<polyline points="301.8,253.4 305.2,252.3 308.6,251.5 312.0,250.8 315.4,250.9 318.8,251.0 322.2,251.1 325.6,251.9 329.0,252.7 332.4,253.5 335.8,254.3 339.2,254.6 342.6,255.0 346.0,255.3 349.4,255.4 352.8,255.2 356.2,255.0 359.6,254.7 363.0,254.4 366.4,254.2 369.8,253.8 373.2,253.3 376.6,253.2 380.0,253.6 383.4,254.1 386.8,254.6 390.2,255.0 393.6,255.3 397.0,255.6 400.4,255.9 403.8,256.2 407.2,256.4 410.6,256.7 414.0,257.0" fill="none" stroke="#3c3c3c" stroke-width="0.45"/>
<polyline points="310.4,254.9 313.8,254.3 317.2,254.0 320.6,253.8 324.0,254.3 327.4,254.9 330.8,255.5 334.2,256.7 337.6,257.6 341.0,258.3 344.4,259.0 347.8,259.4 351.2,259.7 354.6,260.1 358.0,260.3 361.4,260.1 364.8,260.0 368.2,259.7 371.6,259.5 375.0,259.3 378.4,259.0 381.8,258.6 385.2,258.3 388.6,258.8 392.0,259.2 395.4,259.6 398.8,260.0 402.2,260.2 405.6,260.4 409.0,260.6 412.4,260.0 415.8,259.3 419.2,258.7 422.6,258.0" fill="none" stroke="#3c3c3c" stroke-width="0.45"/>
<polyline points="319.1,259.5 322.5,259.3 325.9,259.4 329.3,259.6 332.7,260.5 336.1,261.5 339.5,262.5 342.9,264.1 346.3,264.9 349.7,265.5 353.1,266.1 356.5,266.3 359.9,266.6 363.3,267.0 366.7,267.1 370.1,267.0 373.4,266.8 376.8,266.5 380.2,266.3 383.6,266.0 387.0,265.7 390.4,265.2 393.8,264.9 397.2,265.2 400.6,265.4 404.0,265.7 407.4,265.9 410.8,266.0 414.2,266.1 417.6,266.2 421.0,264.5 424.4,262.9 427.8,261.2 431.2,259.5" fill="none" stroke="#3c3c3c" stroke-width="0.45"/>
<polyline points="327.7,262.3 331.1,261.9 334.5,261.9 337.9,261.9 341.3,262.7 344.7,263.5 348.1,264.3 351.5,265.6 354.9,266.3 358.3,266.9 361.7,267.4 365.1,267.6 368.5,267.9 371.9,268.3 375.3,268.5 378.7,268.4 382.1,268.2 385.5,268.0 388.9,267.8 392.3,267.6 395.7,267.4 399.1,266.9 402.4,266.5 405.8,266.7 409.2,266.9 412.6,267.1 416.0,267.2 419.4,267.2 422.8,267.2 426.2,267.2 429.6,265.8 433.0,264.4 436.4,262.9 439.8,261.4" fill="none" stroke="#3c3c3c" stroke-width="0.45"/>
<polyline points="336.4,264.9 339.8,264.4 343.2,264.2 346.6,264.1 350.0,264.7 353.4,265.3 356.8,265.9 360.1,267.0 363.5,267.6 366.9,268.1 370.3,268.6 373.7,268.7 377.1,269.1 380.5,269.5 383.9,269.8 387.3,269.7 390.7,269.7 394.1,269.5 397.5,269.3 400.9,269.2 404.3,269.0 407.7,268.5 411.1,268.2 414.5,268.3 417.9,268.4 421.2,268.5 424.6,268.6 428.0,268.5 431.4,268.5 434.8,268.4 438.2,267.2 441.6,266.0 445.0,264.8 448.4,263.5" fill="none" stroke="#3c3c3c" stroke-width="0.45"/>
<polyline points="345.0,273.9 348.4,273.1 351.8,272.6 355.2,272.1 358.6,272.3 362.0,272.6 365.4,272.9 368.8,273.6 372.2,274.0 375.6,274.2 379.0,274.4 382.4,274.4 385.7,274.6 389.1,274.9 392.5,275.0 395.9,274.9 399.3,274.6 402.7,274.4 406.1,274.1 409.5,273.8 412.9,273.5 416.3,272.9 419.7,272.3 423.1,272.2 426.5,272.0 429.9,271.9 433.2,271.7 436.6,271.4 440.0,271.1 443.4,270.9 446.8,269.7 450.2,268.5 453.6,267.4 457.0,266.2" fill="none" stroke="#3c3c3c" stroke-width="0.45"/>
<polyline points="353.7,277.3 357.1,276.4 360.5,275.7 363.9,275.1 367.2,275.2 370.6,275.3 374.0,275.4 377.4,275.9 380.8,276.1 384.2,276.3 387.6,276.4 391.0,276.4 394.4,276.6 397.8,276.9 401.2,277.1 404.6,277.0 407.9,276.9 411.3,276.6 414.7,276.4 418.1,276.2 421.5,275.9 424.9,275.3 428.3,274.7 431.7,274.5 435.1,274.3 438.5,274.1 441.9,273.8 445.3,273.5 448.6,273.1 452.0,272.8 455.4,271.8 458.8,270.9 462.2,269.9 465.6,269.0" fill="none" stroke="#3c3c3c" stroke-width="0.45"/>
<polyline points="362.3,282.1 365.7,281.0 369.1,280.2 372.5,279.4 375.9,279.2 379.3,279.1 382.7,279.0 386.1,279.3 389.4,279.4 392.8,279.5 396.2,279.6 399.6,279.5 403.0,279.7 406.4,280.0 409.8,280.2 413.2,280.3 416.6,280.1 420.0,279.9 423.3,279.7 426.7,279.5 430.1,279.3 433.5,278.7 436.9,278.0 440.3,277.7 443.7,277.4 447.1,277.1 450.5,276.8 453.9,276.4 457.2,275.9 460.6,275.5 464.0,274.8 467.4,274.1 470.8,273.3 474.2,272.6" fill="none" stroke="#3c3c3c" stroke-width="0.45"/>
<polyline points="371.0,280.4 374.4,279.3 377.8,278.5 381.1,277.7 384.5,277.6 387.9,277.5 391.3,277.4 394.7,277.6 398.1,277.8 401.5,278.0 404.9,278.2 408.2,278.3 411.6,278.7 415.0,279.3 418.4,279.7 421.8,280.0 425.2,280.0 428.6,280.1 432.0,280.1 435.4,280.1 438.7,280.1 442.1,279.8 445.5,279.3 448.9,279.1 452.3,278.9 455.7,278.7 459.1,278.5 462.5,278.2 465.9,277.8 469.2,277.5 472.6,277.2 476.0,276.9 479.4,276.5 482.8,276.2" fill="none" stroke="#3c3c3c" stroke-width="0.45"/>
<polyline points="379.6,282.9 383.0,281.9 386.4,281.1 389.8,280.4 393.2,280.3 396.6,280.2 399.9,280.2 403.3,280.4 406.7,280.6 410.1,280.8 413.5,281.0 416.9,281.0 420.3,281.6 423.7,282.2 427.0,282.7 430.4,283.1 433.8,283.3 437.2,283.4 440.6,283.6 444.0,283.7 447.4,283.8 450.8,283.5 454.1,283.1 457.5,282.8 460.9,282.6 464.3,282.4 467.7,282.2 471.1,281.8 474.5,281.5 477.9,281.2 481.2,280.8 484.6,280.5 488.0,280.2 491.4,279.8" fill="none" stroke="#3c3c3c" stroke-width="0.45"/>
<polyline points="388.3,290.0 391.7,289.0 395.0,288.1 398.4,287.3 401.8,287.1 405.2,287.0 408.6,286.8 412.0,286.9 415.4,287.0 418.7,287.0 422.1,287.1 425.5,287.0 428.9,287.6 432.3,288.1 435.7,288.6 439.1,289.0 442.4,289.2 445.8,289.3 449.2,289.4 452.6,289.5 456.0,289.5 459.4,289.2 462.8,288.7 466.1,288.3 469.5,287.9 472.9,287.6 476.3,287.2 479.7,286.7 483.1,286.2 486.5,285.8 489.8,285.3 493.2,284.8 496.6,284.4 500.0,283.9" fill="none" stroke="#3c3c3c" stroke-width="0.45"/>
<polyline points="396.9,294.5 400.3,293.7 403.7,292.9 407.1,292.2 410.5,292.0 413.8,291.9 417.2,291.9 420.6,292.0 424.0,292.0 427.4,292.1 430.8,292.2 434.1,292.2 437.5,292.8 440.9,293.5 444.3,294.2 447.7,294.7 451.1,295.0 454.4,295.2 457.8,295.4 461.2,295.7 464.6,295.9 468.0,295.7 471.4,295.1 474.8,294.8 478.1,294.4 481.5,294.1 484.9,293.7 488.3,293.3 491.7,292.8 495.1,292.3 498.4,291.9 501.8,291.4 505.2,291.0 508.6,290.5" fill="none" stroke="#3c3c3c" stroke-width="0.45"/>
<polyline points="405.6,299.7 408.9,298.9 412.3,298.2 415.7,297.6 419.1,297.5 422.5,297.5 425.9,297.5 429.2,297.6 432.6,297.7 436.0,297.8 439.4,298.0 442.8,298.0 446.2,298.7 449.5,299.6 452.9,300.3 456.3,301.0 459.7,301.4 463.1,301.8 466.5,302.2 469.8,302.5 473.2,302.9 476.6,302.8 480.0,302.3 483.4,302.0 486.8,301.7 490.1,301.3 493.5,301.0 496.9,300.5 500.3,300.1 503.7,299.7 507.1,299.2 510.4,298.8 513.8,298.4 517.2,297.9" fill="none" stroke="#3c3c3c" stroke-width="0.45"/>
<polyline points="414.2,305.9 417.6,305.3 421.0,304.6 424.4,304.0 427.7,304.0 431.1,304.1 434.5,304.1 437.9,304.2 441.3,304.3 444.6,304.4 448.0,304.5 451.4,304.6 454.8,305.4 458.2,306.3 461.5,307.2 464.9,308.0 468.3,308.5 471.7,309.0 475.1,309.5 478.5,309.9 481.8,310.4 485.2,310.4 488.6,310.0 492.0,309.6 495.4,309.2 498.7,308.9 502.1,308.5 505.5,308.1 508.9,307.6 512.3,307.2 515.7,306.7 519.0,306.3 522.4,305.9 525.8,305.4" fill="none" stroke="#3c3c3c" stroke-width="0.45"/>
<polyline points="422.9,313.3 426.2,312.6 429.6,312.0 433.0,311.3 436.4,311.3 439.8,311.2 443.1,311.2 446.5,311.2 449.9,311.2 453.3,311.3 456.7,311.3 460.0,311.3 463.4,312.1 466.8,313.0 470.2,313.9 473.6,314.7 476.9,315.3 480.3,315.7 483.7,316.2 487.1,316.7 490.5,317.1 493.8,317.1 497.2,316.6 500.6,316.2 504.0,315.7 507.4,315.2 510.7,314.8 514.1,314.2 517.5,313.7 520.9,313.1 524.3,312.6 527.6,312.0 531.0,311.5 534.4,310.9" fill="none" stroke="#3c3c3c" stroke-width="0.45"/>
<polyline points="431.5,320.9 434.9,320.1 438.3,319.4 441.6,318.6 445.0,318.5 448.4,318.3 451.8,318.2 455.2,318.1 458.5,317.9 461.9,317.8 465.3,317.7 468.7,317.5 472.0,318.3 475.4,319.1 478.8,319.9 482.2,320.8 485.6,321.3 488.9,321.7 492.3,322.1 495.7,322.5 499.1,323.0 502.5,322.9 505.8,322.3 509.2,321.6 512.6,321.0 516.0,320.4 519.3,319.7 522.7,319.0 526.1,318.3 529.5,317.6 532.9,316.9 536.2,316.2 539.6,315.5 543.0,314.8" fill="none" stroke="#3c3c3c" stroke-width="0.45"/>
<polyline points="301.8,253.4 304.7,253.8 307.6,254.1 310.4,254.9 313.3,256.6 316.2,258.2 319.1,259.5 322.0,260.4 324.9,261.3 327.7,262.3 330.6,263.1 333.5,263.9 336.4,264.9 339.3,266.9 342.2,270.4 345.0,273.9 347.9,275.2 350.8,276.3 353.7,277.3 356.6,278.8 359.4,280.5 362.3,282.1 365.2,281.7 368.1,281.0 371.0,280.4 373.9,280.5 376.7,281.7 379.6,282.9 382.5,284.2 385.4,287.1 388.3,290.0 391.1,291.6 394.0,293.1 396.9,294.5 399.8,296.0 402.7,297.8 405.6,299.7 408.4,301.5 411.3,303.4 414.2,305.9 417.1,308.6 420.0,311.2 422.9,313.3 425.7,315.1 428.6,318.0 431.5,320.9" fill="none" stroke="#3c3c3c" stroke-width="0.45"/>
<polyline points="312.0,250.8 314.9,251.7 317.8,252.6 320.6,253.8 323.5,255.9 326.4,257.9 329.3,259.6 332.2,260.4 335.0,261.2 337.9,261.9 340.8,262.6 343.7,263.3 346.6,264.1 349.5,265.9 352.3,269.0 355.2,272.1 358.1,273.3 361.0,274.2 363.9,275.1 366.7,276.4 369.6,277.9 372.5,279.4 375.4,279.0 378.3,278.4 381.1,277.7 384.0,278.0 386.9,279.2 389.8,280.4 392.7,281.8 395.5,284.5 398.4,287.3 401.3,289.1 404.2,290.6 407.1,292.2 409.9,293.7 412.8,295.6 415.7,297.6 418.6,299.5 421.5,301.4 424.4,304.0 427.2,306.6 430.1,309.2 433.0,311.3 435.9,313.1 438.8,315.8 441.6,318.6" fill="none" stroke="#3c3c3c" stroke-width="0.45"/>
<polyline points="322.2,251.1 325.1,252.5 328.0,253.9 330.8,255.5 333.7,258.0 336.6,260.4 339.5,262.5 342.4,263.1 345.2,263.7 348.1,264.3 351.0,264.8 353.9,265.3 356.8,265.9 359.6,267.5 362.5,270.2 365.4,272.9 368.3,273.9 371.1,274.6 374.0,275.4 376.9,276.5 379.8,277.8 382.7,279.0 385.5,278.6 388.4,278.0 391.3,277.4 394.2,277.8 397.1,279.0 399.9,280.2 402.8,281.5 405.7,284.1 408.6,286.8 411.5,288.6 414.3,290.2 417.2,291.9 420.1,293.5 423.0,295.5 425.9,297.5 428.7,299.5 431.6,301.5 434.5,304.1 437.4,306.6 440.3,309.2 443.1,311.2 446.0,312.9 448.9,315.5 451.8,318.2" fill="none" stroke="#3c3c3c" stroke-width="0.45"/>
<polyline points="332.4,253.5 335.3,255.0 338.2,256.5 341.0,258.3 343.9,260.8 346.8,263.3 349.7,265.5 352.5,265.9 355.4,266.4 358.3,266.9 361.2,267.2 364.1,267.6 366.9,268.1 369.8,269.4 372.7,271.8 375.6,274.2 378.4,275.0 381.3,275.7 384.2,276.3 387.1,277.3 390.0,278.4 392.8,279.5 395.7,279.2 398.6,278.6 401.5,278.0 404.3,278.5 407.2,279.6 410.1,280.8 413.0,282.1 415.9,284.5 418.7,287.0 421.6,288.8 424.5,290.5 427.4,292.1 430.3,293.8 433.1,295.8 436.0,297.8 438.9,299.9 441.8,302.0 444.6,304.4 447.5,306.9 450.4,309.4 453.3,311.3 456.2,312.9 459.0,315.3 461.9,317.8" fill="none" stroke="#3c3c3c" stroke-width="0.45"/>
<polyline points="342.6,255.0 345.5,256.5 348.4,258.0 351.2,259.7 354.1,262.1 357.0,264.5 359.9,266.6 362.7,267.0 365.6,267.5 368.5,267.9 371.4,268.3 374.2,268.7 377.1,269.1 380.0,270.3 382.9,272.5 385.7,274.6 388.6,275.4 391.5,276.0 394.4,276.6 397.3,277.6 400.1,278.7 403.0,279.7 405.9,279.5 408.8,279.1 411.6,278.7 414.5,279.3 417.4,280.4 420.3,281.6 423.1,282.9 426.0,285.1 428.9,287.6 431.8,289.4 434.7,291.1 437.5,292.8 440.4,294.6 443.3,296.6 446.2,298.7 449.0,300.9 451.9,303.0 454.8,305.4 457.7,307.9 460.5,310.3 463.4,312.1 466.3,313.7 469.2,315.9 472.0,318.3" fill="none" stroke="#3c3c3c" stroke-width="0.45"/>
<polyline points="352.8,255.2 355.7,256.8 358.6,258.3 361.4,260.1 364.3,262.5 367.2,264.8 370.1,267.0 372.9,267.4 375.8,267.9 378.7,268.4 381.6,268.8 384.4,269.3 387.3,269.7 390.2,270.9 393.1,272.9 395.9,274.9 398.8,275.7 401.7,276.4 404.6,277.0 407.4,278.0 410.3,279.1 413.2,280.3 416.1,280.3 418.9,280.1 421.8,280.0 424.7,280.7 427.6,281.9 430.4,283.1 433.3,284.5 436.2,286.6 439.1,289.0 441.9,291.0 444.8,292.8 447.7,294.7 450.6,296.6 453.4,298.8 456.3,301.0 459.2,303.3 462.1,305.6 464.9,308.0 467.8,310.5 470.7,312.9 473.6,314.7 476.4,316.3 479.3,318.5 482.2,320.8" fill="none" stroke="#3c3c3c" stroke-width="0.45"/>
<polyline points="363.0,254.4 365.9,256.1 368.7,257.7 371.6,259.5 374.5,261.8 377.4,264.2 380.2,266.3 383.1,266.7 386.0,267.3 388.9,267.8 391.7,268.3 394.6,268.8 397.5,269.3 400.4,270.4 403.2,272.3 406.1,274.1 409.0,274.9 411.9,275.7 414.7,276.4 417.6,277.4 420.5,278.6 423.3,279.7 426.2,279.9 429.1,280.0 432.0,280.1 434.8,281.0 437.7,282.3 440.6,283.6 443.5,285.0 446.3,287.0 449.2,289.4 452.1,291.4 455.0,293.4 457.8,295.4 460.7,297.5 463.6,299.8 466.5,302.2 469.3,304.6 472.2,307.0 475.1,309.5 477.9,312.0 480.8,314.4 483.7,316.2 486.6,317.8 489.4,320.0 492.3,322.1" fill="none" stroke="#3c3c3c" stroke-width="0.45"/>
<polyline points="373.2,253.3 376.1,255.0 378.9,256.7 381.8,258.6 384.7,260.8 387.6,263.1 390.4,265.2 393.3,265.7 396.2,266.3 399.1,266.9 401.9,267.4 404.8,268.0 407.7,268.5 410.5,269.6 413.4,271.2 416.3,272.9 419.2,273.8 422.0,274.5 424.9,275.3 427.8,276.4 430.6,277.5 433.5,278.7 436.4,279.1 439.3,279.5 442.1,279.8 445.0,280.8 447.9,282.2 450.8,283.5 453.6,285.0 456.5,287.0 459.4,289.2 462.2,291.4 465.1,293.5 468.0,295.7 470.9,297.9 473.7,300.3 476.6,302.8 479.5,305.3 482.3,307.9 485.2,310.4 488.1,312.9 491.0,315.4 493.8,317.1 496.7,318.8 499.6,320.8 502.5,322.9" fill="none" stroke="#3c3c3c" stroke-width="0.45"/>
<polyline points="383.4,254.1 386.3,255.8 389.1,257.4 392.0,259.2 394.9,261.3 397.8,263.4 400.6,265.4 403.5,265.8 406.4,266.3 409.2,266.9 412.1,267.4 415.0,267.9 417.9,268.4 420.7,269.3 423.6,270.6 426.5,272.0 429.3,272.8 432.2,273.6 435.1,274.3 437.9,275.3 440.8,276.4 443.7,277.4 446.6,278.0 449.4,278.4 452.3,278.9 455.2,280.0 458.0,281.3 460.9,282.6 463.8,284.0 466.7,285.8 469.5,287.9 472.4,290.1 475.3,292.2 478.1,294.4 481.0,296.7 483.9,299.1 486.8,301.7 489.6,304.2 492.5,306.8 495.4,309.2 498.2,311.7 501.1,314.0 504.0,315.7 506.8,317.3 509.7,319.1 512.6,321.0" fill="none" stroke="#3c3c3c" stroke-width="0.45"/>
<polyline points="393.6,255.3 396.5,256.9 399.3,258.5 402.2,260.2 405.1,262.1 407.9,264.1 410.8,266.0 413.7,266.3 416.6,266.8 419.4,267.2 422.3,267.7 425.2,268.1 428.0,268.5 430.9,269.2 433.8,270.3 436.6,271.4 439.5,272.2 442.4,272.8 445.3,273.5 448.1,274.4 451.0,275.4 453.9,276.4 456.7,277.0 459.6,277.6 462.5,278.2 465.3,279.3 468.2,280.6 471.1,281.8 473.9,283.2 476.8,284.8 479.7,286.7 482.6,288.9 485.4,291.0 488.3,293.3 491.2,295.6 494.0,298.0 496.9,300.5 499.8,303.1 502.6,305.7 505.5,308.1 508.4,310.4 511.2,312.7 514.1,314.2 517.0,315.7 519.9,317.3 522.7,319.0" fill="none" stroke="#3c3c3c" stroke-width="0.45"/>
<polyline points="403.8,256.2 406.7,257.4 409.5,258.7 412.4,260.0 415.3,261.5 418.1,263.1 421.0,264.5 423.9,264.8 426.7,265.3 429.6,265.8 432.5,266.3 435.3,266.8 438.2,267.2 441.1,267.9 444.0,268.8 446.8,269.7 449.7,270.4 452.6,271.1 455.4,271.8 458.3,272.8 461.2,273.8 464.0,274.8 466.9,275.6 469.8,276.4 472.6,277.2 475.5,278.3 478.4,279.6 481.2,280.8 484.1,282.1 487.0,283.5 489.8,285.3 492.7,287.5 495.6,289.6 498.4,291.9 501.3,294.2 504.2,296.6 507.1,299.2 509.9,301.9 512.8,304.5 515.7,306.7 518.5,309.0 521.4,311.2 524.3,312.6 527.1,314.0 530.0,315.4 532.9,316.9" fill="none" stroke="#3c3c3c" stroke-width="0.45"/>
<polyline points="414.0,257.0 416.9,257.3 419.7,257.7 422.6,258.0 425.5,258.5 428.3,259.0 431.2,259.5 434.1,260.0 436.9,260.7 439.8,261.4 442.7,262.2 445.5,262.9 448.4,263.5 451.3,264.3 454.1,265.3 457.0,266.2 459.9,267.1 462.7,268.1 465.6,269.0 468.5,270.2 471.3,271.4 474.2,272.6 477.1,273.8 479.9,275.0 482.8,276.2 485.7,277.4 488.5,278.6 491.4,279.8 494.3,281.0 497.1,282.2 500.0,283.9 502.9,286.0 505.7,288.2 508.6,290.5 511.5,292.9 514.3,295.3 517.2,297.9 520.1,300.6 522.9,303.2 525.8,305.4 528.7,307.6 531.5,309.6 534.4,310.9 537.3,312.2 540.1,313.5 543.0,314.8" fill="none" stroke="#3c3c3c" stroke-width="0.45"/>
<polyline points="350.0,271.5 372.0,277.0 395.0,280.5 420.0,284.0 445.0,289.0 470.0,297.0" fill="none" stroke="#2c2c2c" stroke-width="0.45" opacity="0.65"/>
<polyline points="360.0,275.0 380.0,279.5 400.0,283.0 425.0,287.0 450.0,293.0 476.0,301.0" fill="none" stroke="#2c2c2c" stroke-width="0.45" opacity="0.65"/>
<polyline points="385.0,281.0 405.0,285.0 430.0,289.5 455.0,296.0 470.0,300.5" fill="none" stroke="#2c2c2c" stroke-width="0.45" opacity="0.65"/>
<polyline points="366.0,276.5 390.0,280.0 415.0,283.5 440.0,288.0 462.0,294.5" fill="none" stroke="#2c2c2c" stroke-width="0.45" opacity="0.65"/>
<line x1="301.20" y1="207.20" x2="431.60" y2="249.80" stroke="#a0a2a6" stroke-width="0.65" opacity="1.00"/>
<line x1="431.60" y1="249.80" x2="544.70" y2="223.50" stroke="#a0a2a6" stroke-width="0.65" opacity="1.00"/>
<line x1="431.60" y1="249.80" x2="431.50" y2="443.70" stroke="#a0a2a6" stroke-width="0.65" opacity="1.00"/>
</svg>
<div class="t" style="left:554.90px;top:223.30px;color:#fff;font-size:5.85px;text-shadow:0 0 0.5px currentColor;">95,85</div>
<div class="t" style="left:554.90px;top:240.94px;color:#fff;font-size:5.85px;text-shadow:0 0 0.5px currentColor;">78,35</div>
<div class="t" style="left:554.90px;top:258.58px;color:#fff;font-size:5.85px;text-shadow:0 0 0.5px currentColor;">60,86</div>
<div class="t" style="left:554.90px;top:276.22px;color:#fff;font-size:5.85px;text-shadow:0 0 0.5px currentColor;">43,36</div>
<div class="t" style="left:554.90px;top:293.86px;color:#fff;font-size:5.85px;text-shadow:0 0 0.5px currentColor;">25,87</div>
<div class="t" style="left:554.90px;top:311.50px;color:#fff;font-size:5.85px;text-shadow:0 0 0.5px currentColor;">8,37</div>
<div class="t" style="left:554.90px;top:329.14px;color:#fff;font-size:5.85px;text-shadow:0 0 0.5px currentColor;">-9,13</div>
<div class="t" style="left:554.90px;top:346.78px;color:#fff;font-size:5.85px;text-shadow:0 0 0.5px currentColor;">-26,62</div>
<div class="t" style="left:554.90px;top:364.42px;color:#fff;font-size:5.85px;text-shadow:0 0 0.5px currentColor;">-44,12</div>
<div class="t" style="left:554.90px;top:382.06px;color:#fff;font-size:5.85px;text-shadow:0 0 0.5px currentColor;">-61,61</div>
<div class="t" style="left:554.90px;top:399.70px;color:#fff;font-size:5.85px;text-shadow:0 0 0.5px currentColor;">-79,11</div>
<div class="t" style="left:554.90px;top:417.34px;color:#fff;font-size:5.85px;text-shadow:0 0 0.5px currentColor;">-96,60</div>
<div class="t" style="left:555.40px;top:200.90px;color:#f0f020;font-size:5.85px;text-shadow:0 0 0.5px currentColor;">УОЗ (град.&nbsp; ПКВ)</div>
<div class="t" style="left:302.60px;top:414.00px;color:#fff;font-size:5.85px;transform:translate(-50%,-50%);text-shadow:0 0 0.5px currentColor;">6000</div>
<div class="t" style="left:320.04px;top:419.53px;color:#fff;font-size:5.85px;transform:translate(-50%,-50%);text-shadow:0 0 0.5px currentColor;">5200</div>
<div class="t" style="left:337.48px;top:425.06px;color:#fff;font-size:5.85px;transform:translate(-50%,-50%);text-shadow:0 0 0.5px currentColor;">4400</div>
<div class="t" style="left:354.92px;top:430.59px;color:#fff;font-size:5.85px;transform:translate(-50%,-50%);text-shadow:0 0 0.5px currentColor;">3600</div>
<div class="t" style="left:372.36px;top:436.12px;color:#fff;font-size:5.85px;transform:translate(-50%,-50%);text-shadow:0 0 0.5px currentColor;">2800</div>
<div class="t" style="left:389.80px;top:441.65px;color:#fff;font-size:5.85px;transform:translate(-50%,-50%);text-shadow:0 0 0.5px currentColor;">2000</div>
<div class="t" style="left:407.24px;top:447.18px;color:#fff;font-size:5.85px;transform:translate(-50%,-50%);text-shadow:0 0 0.5px currentColor;">1200</div>
<div class="t" style="left:424.68px;top:452.71px;color:#fff;font-size:5.85px;transform:translate(-50%,-50%);text-shadow:0 0 0.5px currentColor;">400</div>
<div class="t" style="left:438.40px;top:452.70px;color:#fff;font-size:5.85px;transform:translate(-50%,-50%);text-shadow:0 0 0.5px currentColor;">10</div>
<div class="t" style="left:458.90px;top:448.01px;color:#fff;font-size:5.85px;transform:translate(-50%,-50%);text-shadow:0 0 0.5px currentColor;">30</div>
<div class="t" style="left:479.40px;top:443.32px;color:#fff;font-size:5.85px;transform:translate(-50%,-50%);text-shadow:0 0 0.5px currentColor;">50</div>
<div class="t" style="left:499.90px;top:438.63px;color:#fff;font-size:5.85px;transform:translate(-50%,-50%);text-shadow:0 0 0.5px currentColor;">70</div>
<div class="t" style="left:520.40px;top:433.94px;color:#fff;font-size:5.85px;transform:translate(-50%,-50%);text-shadow:0 0 0.5px currentColor;">90</div>
<div class="t" style="left:540.90px;top:429.25px;color:#fff;font-size:5.85px;transform:translate(-50%,-50%);text-shadow:0 0 0.5px currentColor;">110</div>
<div class="t" style="left:314.40px;top:445.90px;color:#f0f020;font-size:5.85px;text-shadow:0 0 0.5px currentColor;">Обороты (об/мин)</div>
<div class="t" style="left:493.80px;top:452.40px;color:#f0f020;font-size:5.85px;text-shadow:0 0 0.5px currentColor;">Давление (кПа)</div>
</div></body></html>
